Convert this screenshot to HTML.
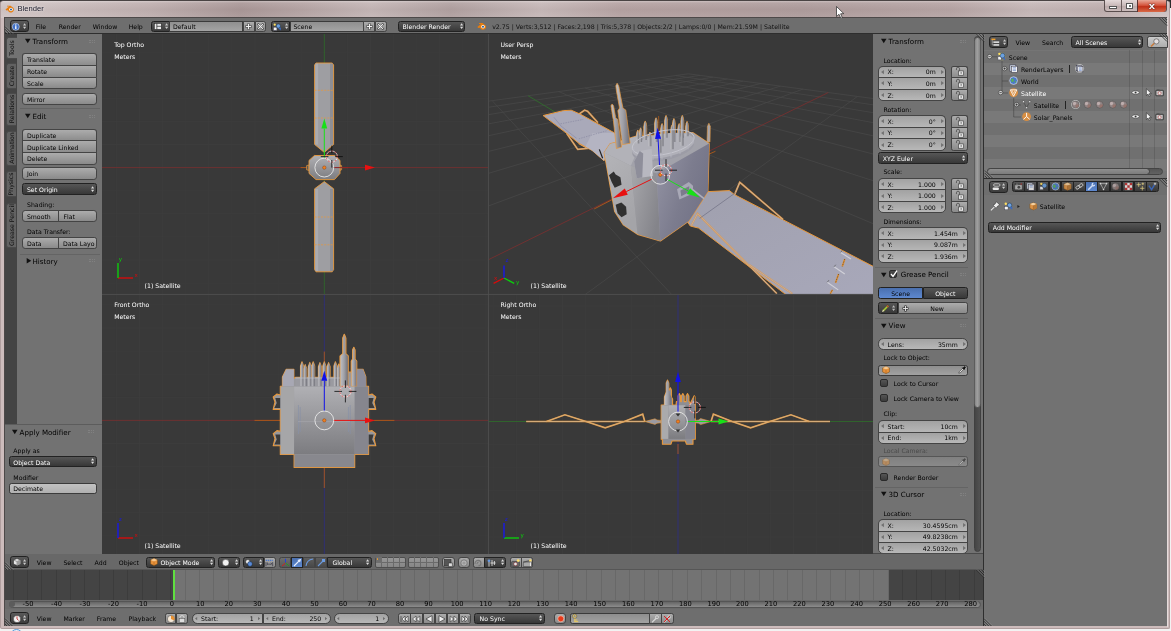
<!DOCTYPE html>
<html lang="en"><head><meta charset="utf-8"><title>Blender</title>
<style>
html,body{margin:0;padding:0;}
body{width:1171px;height:631px;overflow:hidden;position:relative;background:#c8b8b8;font-family:"DejaVu Sans","Liberation Sans",sans-serif;font-size:6.2px;color:#000;line-height:1;}
div,span{position:absolute;box-sizing:border-box;white-space:nowrap;}
svg{position:absolute;overflow:visible;}
.t{font-size:6.2px;line-height:8px;height:8px;color:#000;}
.w{color:#fff;}
.pt{font-size:7.1px;line-height:9px;height:9px;color:#000;}
/* tool button */
.tb{background:linear-gradient(#acacac,#8a8a8a);border:1px solid #444;border-radius:3.2px;}
.nf{background:linear-gradient(#a2a2a2,#b8b8b8);border:1px solid #444;border-radius:5.5px;}
.mn{background:linear-gradient(#565656,#383838);border:1px solid #222;border-radius:2.5px;color:#fff;}
.tf{background:linear-gradient(#999,#999);border:1px solid #3b3b3b;border-radius:2.5px;}
.cb{background:linear-gradient(#555,#3c3c3c);border:1px solid #2a2a2a;border-radius:2px;}
.sel{background:linear-gradient(#4a6fae,#5d88d0);border:1px solid #222;}
.sep{background:#666;height:1px;}
#root{left:0;top:0;width:1171px;height:631px;overflow:hidden;will-change:transform;}

</style></head>
<body>
<div id="root">
<!-- window frame -->
<div style="left:0px;top:0px;width:1171px;height:631px;background:#f2f2f2;"></div>
<div style="left:0px;top:0px;width:1171px;height:8px;background:#2c2c2c;"></div>
<div style="left:9.6px;top:628.6px;width:13px;height:13px;border-radius:7px;border:1.2px solid #5a9ad8;background:#e8f2fc;"></div>
<div style="left:0;top:0;width:1170px;height:629px;border-radius:4px 4px 2px 2px;background:#cdbcbc;border:1px solid #b09e9e;border-top-color:#4a4444;"></div>
<div style="left:1px;top:1px;width:1168px;height:17px;border-radius:3px 3px 0 0;background:linear-gradient(90deg,#d0c4c4 0px,#ccbfbf 50px,#bfafaf 150px,#a99797 240px,#b5a4a4 300px,#c4b6b6 370px,#b0a0a0 450px,#c6b8b8 540px,#b5a2a2 620px,#ae9c9c 800px,#b6a4a4 950px,#c6b8b8 1030px,#bfafaf 1100px,#d0c4c4 1170px);"></div>
<div style="left:1px;top:1px;width:1168px;height:17px;border-radius:3px 3px 0 0;background:linear-gradient(rgba(255,255,255,.35),rgba(255,255,255,.08) 12%,rgba(0,0,0,.02) 50%,rgba(255,255,255,.06));"></div>
<div style="left:4px;top:17px;width:1163px;height:609.4px;background:#4d4949;"></div>
<div style="left:1167px;top:18px;width:1px;height:609px;background:#e6dcdc;"></div>
<div style="left:5px;top:18px;width:1162px;height:608px;background:#2e2e2e;"></div>
<svg style="left:5px;top:4px" width="10" height="10" viewBox="0 0 20 20"><path d="M1 11 L8 5 L4 5 L4 3.4 L11 3.4 L17 8 A6 6 0 1 1 6 12.5 L3 12.8 Z" fill="#e87d0d"/><circle cx="12" cy="11" r="3.6" fill="#fff"/><circle cx="12" cy="11" r="2" fill="#235b9c"/></svg>
<div style="left:17.5px;top:4px;font-family:'Liberation Sans',sans-serif;font-size:7.6px;line-height:10px;color:#1a1a2a;text-shadow:0 0 3px #fff;">Blender</div>
<div style="left:1104px;top:0;width:63px;height:12px;border:1px solid #5a4e4e;border-top:none;border-radius:0 0 3px 3px;background:linear-gradient(#e4d9d9,#c9b9b9 50%,#b9a7a7 52%,#cbbcbc);"></div>
<div style="left:1121px;top:0;width:1px;height:11px;background:#6a5c5c;"></div>
<div style="left:1137px;top:0;width:29px;height:11.5px;border-radius:0 0 3px 0;background:linear-gradient(#e8a898,#d4543c 45%,#c03018 55%,#d86a48);border-left:1px solid #5a3030;"></div>
<div style="left:1109px;top:5.8px;width:8px;height:3px;background:#fff;border:0.5px solid #555;"></div>
<div style="left:1126px;top:3px;width:7px;height:5.5px;background:#fff;border:0.5px solid #555;"></div>
<div style="left:1128.5px;top:5px;width:2.5px;height:1.5px;background:#777;"></div>
<div style="left:1146.4px;top:0.9px;width:12px;transform:scaleX(1.25);font-family:'Liberation Sans',sans-serif;font-weight:bold;font-size:9px;line-height:10px;text-align:center;color:#fff;text-shadow:0 0 1px #422,0 0 1.5px #422;">x</div>
<svg style="left:836px;top:6px" width="9" height="13" viewBox="0 0 9 13"><path d="M0.5 0.5 L0.5 10.5 L3 8.3 L4.8 12.3 L6.3 11.6 L4.6 7.8 L7.8 7.6 Z" fill="#fff" stroke="#222" stroke-width="0.7"/></svg>
<!-- region backgrounds -->
<div style="left:5px;top:18px;width:1162px;height:15px;background:#6e6e6e;"></div>
<div style="left:5px;top:34px;width:97px;height:520px;background:#727272;"></div>
<div style="left:102px;top:34px;width:771px;height:520px;background:#393939;"></div>
<div style="left:873px;top:34px;width:110px;height:520px;background:#727272;"></div>
<div style="left:5px;top:554px;width:978px;height:15.2px;background:#686868;"></div>
<div style="left:5px;top:569.2px;width:978px;height:0.8px;background:#565656;"></div>
<div style="left:5px;top:570px;width:978px;height:30px;background:#444444;"></div>
<div style="left:173.4px;top:570px;width:714.8px;height:30px;background:#737373;"></div>
<div style="left:5px;top:600px;width:978px;height:9px;background:#6a6a6a;"></div>
<div style="left:5px;top:609px;width:978px;height:17px;background:#6e6e6e;"></div>
<div style="left:984px;top:34px;width:183px;height:16px;background:#6e6e6e;"></div>
<div style="left:984px;top:50px;width:183px;height:128px;background:#757575;"></div>
<div style="left:984px;top:179px;width:183px;height:16px;background:#6e6e6e;"></div>
<div style="left:984px;top:195px;width:183px;height:431px;background:#727272;"></div>
<!-- 3D viewports (quad view) -->
<svg style="left:102px;top:34px" width="771" height="520" viewBox="102 34 771 520">
<defs><clipPath id="cTL"><rect x="102" y="34" width="386" height="260"/></clipPath><clipPath id="cTR"><rect x="489" y="34" width="384" height="260"/></clipPath><clipPath id="cBL"><rect x="102" y="295" width="386" height="259"/></clipPath><clipPath id="cBR"><rect x="489" y="295" width="384" height="259"/></clipPath><linearGradient id="gBody" x1="0" y1="0" x2="0" y2="1"><stop offset="0" stop-color="#b0b0b4"/><stop offset="1" stop-color="#7c7c80"/></linearGradient><linearGradient id="gBodyH" x1="0" y1="0" x2="1" y2="0"><stop offset="0" stop-color="#b2b2b4"/><stop offset="0.5" stop-color="#9c9ca0"/><stop offset="1" stop-color="#84848c"/></linearGradient><linearGradient id="gSpire" x1="0" y1="0" x2="1" y2="0"><stop offset="0" stop-color="#c2c2c6"/><stop offset="0.5" stop-color="#a0a0a6"/><stop offset="1" stop-color="#6c6c74"/></linearGradient></defs>
<g clip-path="url(#cTL)"><path d="M116.4 34 V294 M139.5 34 V294 M162.6 34 V294 M185.7 34 V294 M208.8 34 V294 M231.9 34 V294 M255 34 V294 M278.1 34 V294 M301.2 34 V294 M347.4 34 V294 M370.5 34 V294 M393.6 34 V294 M416.7 34 V294 M439.8 34 V294 M462.9 34 V294 M486 34 V294 M102 52.1 H488 M102 75.2 H488 M102 98.3 H488 M102 121.4 H488 M102 144.5 H488 M102 190.7 H488 M102 213.8 H488 M102 236.9 H488 M102 260 H488 M102 283.1 H488 " stroke="#3e3e3e" stroke-width="0.7" fill="none"/><path d="M102 167.6 H488" stroke="#7a2e2e" stroke-width="0.8"/><path d="M324.3 34 V294" stroke="#2f6e2a" stroke-width="0.8"/></g>
<g clip-path="url(#cBL)"><path d="M116.4 295 V554 M139.5 295 V554 M162.6 295 V554 M185.7 295 V554 M208.8 295 V554 M231.9 295 V554 M255 295 V554 M278.1 295 V554 M301.2 295 V554 M347.4 295 V554 M370.5 295 V554 M393.6 295 V554 M416.7 295 V554 M439.8 295 V554 M462.9 295 V554 M486 295 V554 M102 304.9 H488 M102 328 H488 M102 351.1 H488 M102 374.2 H488 M102 397.3 H488 M102 443.5 H488 M102 466.6 H488 M102 489.7 H488 M102 512.8 H488 M102 535.9 H488 " stroke="#3e3e3e" stroke-width="0.7" fill="none"/><path d="M102 420.4 H488" stroke="#7a2e2e" stroke-width="0.8"/><path d="M324.3 295 V554" stroke="#2e2e86" stroke-width="0.8"/></g>
<g clip-path="url(#cBR)"><path d="M493.2 295 V554 M516.3 295 V554 M539.4 295 V554 M562.5 295 V554 M585.6 295 V554 M608.7 295 V554 M631.8 295 V554 M654.9 295 V554 M701.1 295 V554 M724.2 295 V554 M747.3 295 V554 M770.4 295 V554 M793.5 295 V554 M816.6 295 V554 M839.7 295 V554 M862.8 295 V554 M489 306 H873 M489 329.1 H873 M489 352.2 H873 M489 375.3 H873 M489 398.4 H873 M489 444.6 H873 M489 467.7 H873 M489 490.8 H873 M489 513.9 H873 M489 537 H873 " stroke="#3e3e3e" stroke-width="0.7" fill="none"/><path d="M489 421.5 H873" stroke="#2f6e2a" stroke-width="0.8"/><path d="M678 295 V554" stroke="#2e2e86" stroke-width="0.8"/></g>
<g clip-path="url(#cTR)"><path d="M684.02 -429.9 L397.09 113.71 M967.06 -510.91 L931.14 106.3 M139.48 -1449.45 L449.25 106.57 M2378.2 -1974.82 L891.33 100.97 M1615.11 1313.36 L492.19 100.68 M-735.95 1255.77 L857.44 96.43 M1079.4 310.36 L558.71 91.57 M157.42 329 L802.84 89.12 M1038.6 233.97 L585 87.96 M234.3 249.25 L780.52 86.13 M1015.78 191.24 L607.86 84.83 M277.92 203.99 L760.76 83.49 M1001.19 163.93 L627.91 82.08 M306.03 174.83 L743.14 81.13 M991.07 144.98 L645.65 79.65 M325.65 154.47 L727.34 79.01 M983.63 131.06 L661.45 77.49 M340.13 139.46 L713.08 77.1 M977.94 120.39 L675.62 75.55 M351.24 127.93 L700.16 75.37 M973.44 111.96 L688.39 73.8 M360.05 118.79 L688.39 73.8 " stroke="#494949" stroke-width="0.7" fill="none"/><path d="M-14.16 506.99 L828.25 92.52 " stroke="#7e2f2f" stroke-width="0.8"/><path d="M1173.22 486.02 L528.15 95.75 " stroke="#2f722a" stroke-width="0.8"/></g>
<g clip-path="url(#cTL)">
<polyline points="300.6,167.6 348,167.6" fill="none" stroke="#b05a18" stroke-width="0.9" /><polygon points="316,63 332.2,63 333.6,65 333.6,144.4 324.3,152.4 314.6,144.4 314.6,65" fill="#9e9ea2" stroke="#e8983c" stroke-width="0.9" stroke-linejoin="round" /><rect x="315.2" y="63.6" width="3" height="81" fill="#b4b4b8" opacity=".6"/><rect x="330" y="63.6" width="3" height="81" fill="#84848a" opacity=".6"/><polyline points="314.6,90.3 333.6,90.3" fill="none" stroke="#e8983c" stroke-width="0.7" stroke-dasharray="2 1.2"/><polyline points="314.6,118 333.6,118" fill="none" stroke="#e8983c" stroke-width="0.7" stroke-dasharray="2 1.2"/><polygon points="324.3,181.6 333.6,188.8 333.6,269.6 332.2,271.8 316,271.8 314.6,269.6 314.6,188.8" fill="#9e9ea2" stroke="#e8983c" stroke-width="0.9" stroke-linejoin="round" /><rect x="315.2" y="189" width="3" height="82" fill="#b4b4b8" opacity=".6"/><rect x="330" y="189" width="3" height="82" fill="#84848a" opacity=".6"/><polyline points="314.6,217 333.6,217" fill="none" stroke="#e8983c" stroke-width="0.7" stroke-dasharray="2 1.2"/><polyline points="314.6,244.8 333.6,244.8" fill="none" stroke="#e8983c" stroke-width="0.7" stroke-dasharray="2 1.2"/><polygon points="306.6,165.6 309,165 309,170.4 306.6,169.8" fill="#555" stroke="#e8983c" stroke-width="0.7" stroke-linejoin="round" /><polygon points="341.6,165.6 340,165 340,170.4 341.6,169.8" fill="#555" stroke="#e8983c" stroke-width="0.7" stroke-linejoin="round" /><polygon points="314.4,155.5 334.6,155.5 340,160.4 340,173.4 334.4,179.6 316,179.6 309,173.4 309,160.4" fill="url(#gBody)" stroke="#e8983c" stroke-width="0.9" stroke-linejoin="round" /><path d="M324.3 158.2 L324.3 128.6" stroke="#18e018" stroke-width="1"/><polygon points="324.3,118.6 327.2,128.6 321.4,128.6" fill="#18e018" /><path d="M333.7 167.6 L365 167.6" stroke="#8e2424" stroke-width="1"/><polygon points="375,167.6 365,170.5 365,164.7" fill="#e81010" /><circle cx="324.3" cy="167.6" r="9.4" fill="none" stroke="#e8e8e8" stroke-width="0.9"/><circle cx="324.3" cy="167.6" r="1.7" fill="#f08020" stroke="#803000" stroke-width="0.4"/><circle cx="331.8" cy="156.6" r="5.6" fill="none" stroke="#fff" stroke-width="0.7"/><circle cx="331.8" cy="156.6" r="5.6" fill="none" stroke="#e02020" stroke-width="0.7" stroke-dasharray="1.8 1.8"/><path d="M320.8 156.6 H328.4 M335.2 156.6 H342.8 M331.8 145.6 V153.2 M331.8 160 V167.6" stroke="#0a0a0a" stroke-width="0.8"/></g>
<g clip-path="url(#cBL)">
<polyline points="254.5,420.4 394.4,420.4" fill="none" stroke="#b05a18" stroke-width="0.9" /><polyline points="324.3,351.6 324.3,488" fill="none" stroke="#b05a18" stroke-width="0.9" /><polygon points="280.3,386.3 282.4,386.3 282.4,377 286.2,369.2 293.9,369.2 293.9,378.5 295.4,377.4 300.5,377.4 300.5,366 302,361.8 303.5,366 303.5,377.4 303.7,377.4 303.7,368.8 305.2,364.6 306.7,368.8 306.7,377.4 308.3,377.4 308.3,366.6 309.8,362.4 311.3,366.6 311.3,377.4 311.7,377.4 311.7,366 313.2,361.8 314.7,366 314.7,377.4 318.4,377.4 318.4,366.8 319.9,362.6 321.4,366.8 321.4,377.4 322.8,377.4 322.8,366 324.3,361.8 325.8,366 325.8,377.4 327.1,377.4 327.1,366.8 328.6,362.6 330.1,366.8 330.1,377.4 333.9,377.4 333.9,366 335.4,361.8 336.9,366 336.9,377.4 337.2,377.4 337.2,368.2 338.7,364 340.2,368.2 340.2,377.4 340.1,377.4 340.1,356 342.8,353.6 342.8,338 344.3,334.2 345.8,338 345.8,353.6 348.2,356 348.2,372 351.3,372 351.3,361 352.6,359 352.6,350 353.8,347.2 355,350 355,359 356.7,361 356.7,369.2 363,369.2 365.8,376.6 366,386.3 368.6,386.3 368.6,395 372,394 375.8,397 374,402 375.8,409.4 368.6,409.4 368.6,431.4 372,430.6 375.8,433.6 374,438.6 375.8,445.8 368.6,445.8 368.6,454.5 354.7,454.5 354.7,467.5 294.1,467.5 294.1,454.5 280.3,454.5 280.3,445.8 273.2,445.8 275,438.6 273.2,433.6 277,430.6 280.3,431.4 280.3,409.4 273.2,409.4 275,402 273.2,397 277,394 280.3,395" fill="#98989c" stroke="#e8983c" stroke-width="1.1" stroke-linejoin="round" /><polygon points="282.4,386.3 282.4,377 286.2,369.2 293.9,369.2 293.9,386.3" fill="#a8a8b4" /><polygon points="356.7,386.3 356.7,369.2 363,369.2 365.8,376.6 366,386.3" fill="#8c8c9a" /><rect x="295.4" y="377.4" width="56" height="9" fill="#9a9aa0"/><polygon points="300.5,386.3 300.5,366 302,361.8 303.5,366 303.5,386.3" fill="url(#gSpire)" /><polygon points="303.7,386.3 303.7,368.8 305.2,364.6 306.7,368.8 306.7,386.3" fill="url(#gSpire)" /><polygon points="308.3,386.3 308.3,366.6 309.8,362.4 311.3,366.6 311.3,386.3" fill="url(#gSpire)" /><polygon points="311.7,386.3 311.7,366 313.2,361.8 314.7,366 314.7,386.3" fill="url(#gSpire)" /><polygon points="318.4,386.3 318.4,366.8 319.9,362.6 321.4,366.8 321.4,386.3" fill="url(#gSpire)" /><polygon points="322.8,386.3 322.8,366 324.3,361.8 325.8,366 325.8,386.3" fill="url(#gSpire)" /><polygon points="327.1,386.3 327.1,366.8 328.6,362.6 330.1,366.8 330.1,386.3" fill="url(#gSpire)" /><polygon points="333.9,386.3 333.9,366 335.4,361.8 336.9,366 336.9,386.3" fill="url(#gSpire)" /><polygon points="337.2,386.3 337.2,368.2 338.7,364 340.2,368.2 340.2,386.3" fill="url(#gSpire)" /><path d="M295.4 378 H340" stroke="#c0c0c4" stroke-width="0.7"/><polygon points="340.1,386.3 340.1,356 342.8,353.6 342.8,338 344.3,334.2 345.8,338 345.8,353.6 348.2,356 348.2,386.3" fill="url(#gSpire)" stroke="#e8983c" stroke-width="0.6" stroke-linejoin="round" /><polygon points="351.3,386.3 351.3,361 352.6,359 352.6,350 353.8,347.2 355,350 355,359 356.7,361 356.7,386.3" fill="url(#gSpire)" stroke="#e8983c" stroke-width="0.6" stroke-linejoin="round" /><polygon points="280.3,398 275.3,398 276.7,403 274.3,408 280.3,408" fill="#3a3a3a" /><polygon points="280.3,434.4 275.3,434.4 276.7,439.4 274.3,444.4 280.3,444.4" fill="#3a3a3a" /><polygon points="368.6,398 373.6,398 372.2,403 374.6,408 368.6,408" fill="#3a3a3a" /><polygon points="368.6,434.4 373.6,434.4 372.2,439.4 374.6,444.4 368.6,444.4" fill="#3a3a3a" /><rect x="280.6" y="386.6" width="13.5" height="67.6" fill="#a6a6a8"/><rect x="294.1" y="386.6" width="60.6" height="67.6" fill="url(#gBody)"/><rect x="354.7" y="386.6" width="13.6" height="67.6" fill="#86868e"/><rect x="294.5" y="454.5" width="59.8" height="12.6" fill="#88888e"/><path d="M298.4 405 V434 M300.2 407 V432 M350.2 405 V434 M348.4 407 V432" stroke="#8890a8" stroke-width="0.7"/><path d="M298 421.6 H350" stroke="#a8a8ac" stroke-width="0.6"/><path d="M324.3 411 L324.3 380.8" stroke="#1010e8" stroke-width="1"/><polygon points="324.3,370.8 327.2,380.8 321.4,380.8" fill="#1010e8" /><path d="M333.7 420.4 L365 420.4" stroke="#e81010" stroke-width="1"/><polygon points="375,420.4 365,423.3 365,417.5" fill="#e81010" /><circle cx="324.3" cy="420.4" r="9.4" fill="none" stroke="#e8e8e8" stroke-width="0.9"/><circle cx="324.3" cy="420.4" r="1.7" fill="#f08020" stroke="#803000" stroke-width="0.4"/><circle cx="345.4" cy="391.4" r="5.6" fill="none" stroke="#fff" stroke-width="0.7"/><circle cx="345.4" cy="391.4" r="5.6" fill="none" stroke="#e02020" stroke-width="0.7" stroke-dasharray="1.8 1.8"/><path d="M334.4 391.4 H342 M348.8 391.4 H356.4 M345.4 380.4 V388 M345.4 394.8 V402.4" stroke="#0a0a0a" stroke-width="0.8"/></g>
<g clip-path="url(#cBR)">
<polyline points="678,444 678,454" fill="none" stroke="#b05a18" stroke-width="0.9" /><polyline points="526.2,421.5 644.8,421.5" fill="none" stroke="#e8983c" stroke-width="1.7" /><polyline points="526.2,421.5 644.8,421.5" fill="none" stroke="#c8b8a0" stroke-width="0.6" /><polyline points="546.4,421.5 564.9,414.8 586,421.5 605.2,427.8 624.3,421.5 642.7,414.1 644.8,421.5" fill="none" stroke="#e8983c" stroke-width="1.7" /><polyline points="546.4,421.5 564.9,414.8 586,421.5 605.2,427.8 624.3,421.5 642.7,414.1 644.8,421.5" fill="none" stroke="#c8b8a0" stroke-width="0.6" /><polygon points="644.8,421.5 655,418.8 657,420 661.2,420.4 661.2,422.8 657,423.2 655,424.4" fill="#9a9aa2" stroke="#e8983c" stroke-width="0.6" stroke-linejoin="round" /><polyline points="711,421.5 830,421.5" fill="none" stroke="#e8983c" stroke-width="1.7" /><polyline points="711,421.5 830,421.5" fill="none" stroke="#c8b8a0" stroke-width="0.6" /><polyline points="711,421.5 713.4,414.1 732.1,421.5 750.6,427.8 769.7,421.5 790.9,414.8 809.3,421.5" fill="none" stroke="#e8983c" stroke-width="1.7" /><polyline points="711,421.5 713.4,414.1 732.1,421.5 750.6,427.8 769.7,421.5 790.9,414.8 809.3,421.5" fill="none" stroke="#c8b8a0" stroke-width="0.6" /><polygon points="711,421.5 700.6,418.6 698.6,420 695.3,420.4 695.3,422.8 698.6,423.2 700.6,424.6" fill="#9a9aa2" stroke="#e8983c" stroke-width="0.6" stroke-linejoin="round" /><polygon points="661.2,405 664.4,405 664.4,397 666.2,392 666.2,383 667.5,380 668.8,383 668.8,390 669.4,390 670.4,387.8 671.4,390 671.4,397 672.6,399 672.6,405 676,405 676.4,401.6 677.8,401.6 677.8,396 679.2,393.5 680.6,396 680.6,401.6 681.4,401.6 681.4,396 682.8,393.5 684.2,396 684.2,401.6 686.1,401.6 686.1,396 687.5,393.5 688.9,396 688.9,401.6 689.6,402 690,404 694.2,395.7 695.3,397 695.3,405 695.3,439.2 693,439.2 693,444.2 686.4,444.2 685.4,441 672,441 671,444.2 662.4,444.2 662.4,439.2 661.2,439.2" fill="#8e8e94" stroke="#e8983c" stroke-width="1.1" stroke-linejoin="round" /><rect x="661.5" y="405.3" width="7" height="33.6" fill="#aaaaac"/><rect x="668.5" y="405.3" width="17" height="33.6" fill="url(#gBody)"/><rect x="685.5" y="405.3" width="9.5" height="33.6" fill="#84848e"/><polygon points="664.4,405 664.4,397 666.2,392 666.2,383 667.5,380 668.8,383 668.8,392 671.4,397 671.4,405" fill="url(#gSpire)" /><path d="M678 412.1 L678 382.1" stroke="#1010e8" stroke-width="1"/><polygon points="678,372.1 680.9,382.1 675.1,382.1" fill="#1010e8" /><path d="M687.4 421.5 L718.5 421.5" stroke="#18e018" stroke-width="1"/><polygon points="728.5,421.5 718.5,424.4 718.5,418.6" fill="#18e018" /><circle cx="678" cy="421.5" r="9.4" fill="none" stroke="#e8e8e8" stroke-width="0.9"/><circle cx="678" cy="421.5" r="1.7" fill="#f08020" stroke="#803000" stroke-width="0.4"/><path d="M675.6 413.6 H680.4 L678 416.4 Z M675.6 429.4 H680.4 L678 432.4 Z" fill="#333"/><circle cx="694.8" cy="407.4" r="5.6" fill="none" stroke="#fff" stroke-width="0.7"/><circle cx="694.8" cy="407.4" r="5.6" fill="none" stroke="#e02020" stroke-width="0.7" stroke-dasharray="1.8 1.8"/><path d="M683.8 407.4 H691.4 M698.2 407.4 H705.8 M694.8 396.4 V404 M694.8 410.8 V418.4" stroke="#0a0a0a" stroke-width="0.8"/></g>
<g clip-path="url(#cTR)">
<defs><linearGradient id="gR" x1="0" y1="0" x2="1" y2="0.6"><stop offset="0" stop-color="#9696a6"/><stop offset="0.6" stop-color="#7c7c8e"/><stop offset="1" stop-color="#727286"/></linearGradient><linearGradient id="gC" x1="0" y1="0" x2="1" y2="0.6"><stop offset="0" stop-color="#a8a8ac"/><stop offset="1" stop-color="#84848a"/></linearGradient><linearGradient id="gL" x1="0" y1="0" x2="0.4" y2="1"><stop offset="0" stop-color="#b4b4b8"/><stop offset="1" stop-color="#a4a4a8"/></linearGradient><linearGradient id="gPan" x1="0" y1="0" x2="1" y2="1"><stop offset="0" stop-color="#a0a0ae"/><stop offset="1" stop-color="#a8a8ba"/></linearGradient></defs><polyline points="660.3,175.4 658.6,116" fill="none" stroke="#b05a18" stroke-width="0.8" /><polyline points="615.59,197.82 594.19,208.94" fill="none" stroke="#b05a18" stroke-width="0.9" /><polyline points="659.81,175.56 715.45,151.31" fill="none" stroke="#b05a18" stroke-width="0.9" /><polyline points="578.79,114.19 584.56,110.2 587.66,111.31 597.86,122.62" fill="none" stroke="#e8983c" stroke-width="1.7" /><polyline points="578.79,114.19 584.56,110.2 587.66,111.31 597.86,122.62" fill="none" stroke="#b8b8c4" stroke-width="0.6" /><polyline points="566.59,133.27 577.68,149.35 587.66,148.35 578.79,143.25" fill="none" stroke="#e8983c" stroke-width="1.7" /><polyline points="566.59,133.27 577.68,149.35 587.66,148.35 578.79,143.25" fill="none" stroke="#b8b8c4" stroke-width="0.6" /><polygon points="543.08,115.52 563.27,110.65 571.25,110.2 579.9,113.97 614.28,132.82 618.71,142.14 607.62,152.12 604.07,160.77 592.1,150.45 578.79,143.25 566.59,133.27 557.72,126.61" fill="#a9a9b9" stroke="#e8983c" stroke-width="1.0" stroke-linejoin="round" /><polygon points="592.1,133.27 614.28,132.82 618.71,142.14 607.62,152.12 604.07,160.77 592.1,150.45 585.44,146.57" fill="#b4b4c2" /><polyline points="560.49,123.84 583.23,119.41" fill="none" stroke="#7c7c98" stroke-width="0.5" stroke-dasharray="1.5 1"/><polyline points="578.79,138.81 607.62,130.49" fill="none" stroke="#7c7c98" stroke-width="0.5" stroke-dasharray="1.5 1"/><polyline points="553.84,117.19 561.05,126.06 576.57,138.26" fill="none" stroke="#8080a0" stroke-width="0.5" /><polyline points="599.31,149.35 602.63,158.22" fill="none" stroke="#222" stroke-width="1.2" /><polygon points="706.78,191.63 729.43,190.6 734.58,194.72 873.2,266.4 877.73,268.87 877.73,301.82 795.35,301.82 698.54,228.08 690.3,226.02 687.21,221.49" fill="url(#gPan)" stroke="#e8983c" stroke-width="1.0" stroke-linejoin="round" /><polyline points="734.58,194.72 739.73,182.36 741.79,184.01 782.99,219.43" fill="none" stroke="#e8983c" stroke-width="1.8" /><polyline points="734.58,194.72 739.73,182.36 741.79,184.01 782.99,219.43" fill="none" stroke="#b8b8c4" stroke-width="0.7" /><polyline points="691.33,225.61 697.51,213.67 776.81,293.58" fill="none" stroke="#e8983c" stroke-width="1.6" /><polyline points="691.33,225.61 697.51,213.67 776.81,293.58" fill="none" stroke="#b0b0c0" stroke-width="0.8" /><polyline points="749,264.75 792.26,293.58" fill="none" stroke="#e8983c" stroke-width="1.6" /><polyline points="749,264.75 792.26,293.58" fill="none" stroke="#b0b0c0" stroke-width="0.8" /><polyline points="699.57,218.4 735.61,192.66" fill="none" stroke="#5a5a70" stroke-width="0.5" /><polyline points="840.66,252.39 850.96,258.98" fill="none" stroke="#d0d0d8" stroke-width="1.2" /><polyline points="840.66,252.39 842.31,250.33" fill="none" stroke="#555" stroke-width="0.7" /><polyline points="834.07,266.81 844.78,274.02" fill="none" stroke="#d0d0d8" stroke-width="1.2" /><polyline points="834.07,266.81 835.72,264.75" fill="none" stroke="#555" stroke-width="0.7" /><polyline points="827.27,282.26 838.19,289.88" fill="none" stroke="#d0d0d8" stroke-width="1.2" /><polyline points="827.27,282.26 828.92,280.2" fill="none" stroke="#555" stroke-width="0.7" /><polyline points="844.78,258.98 842.31,266.4" fill="none" stroke="#e8983c" stroke-width="1.8" /><polyline points="844.78,258.98 842.31,266.4" fill="none" stroke="#222" stroke-width="0.6" stroke-dasharray="1 0.8"/><polyline points="838.6,274.02 835.51,282.87" fill="none" stroke="#e8983c" stroke-width="1.8" /><polyline points="838.6,274.02 835.51,282.87" fill="none" stroke="#222" stroke-width="0.6" stroke-dasharray="1 0.8"/><polyline points="832.42,289.88 830.36,293.58" fill="none" stroke="#e8983c" stroke-width="1.8" /><polyline points="832.42,289.88 830.36,293.58" fill="none" stroke="#222" stroke-width="0.6" stroke-dasharray="1 0.8"/><polygon points="685.61,136.36 685.61,127.08 686.18,123.37 687.04,121.38 687.89,123.37 688.46,127.08 688.46,136.36" fill="#e8983c" stroke="#e8983c" stroke-width="0.9" stroke-linejoin="round" /><polygon points="664.63,137.79 664.63,121.09 665.21,117.38 666.06,115.38 666.92,117.38 667.49,121.09 667.49,137.79" fill="#e8983c" stroke="#e8983c" stroke-width="0.9" stroke-linejoin="round" /><polygon points="680.9,137.79 680.9,121.09 681.47,117.38 682.33,115.38 683.18,117.38 683.76,121.09 683.76,137.79" fill="#e8983c" stroke="#e8983c" stroke-width="0.9" stroke-linejoin="round" /><polygon points="643.8,139.93 643.8,126.66 644.37,122.95 645.23,120.95 646.08,122.95 646.66,126.66 646.66,139.93" fill="#e8983c" stroke="#e8983c" stroke-width="0.9" stroke-linejoin="round" /><polygon points="639.24,142.07 639.24,133.5 639.81,129.79 640.66,127.8 641.52,129.79 642.09,133.5 642.09,142.07" fill="#e8983c" stroke="#e8983c" stroke-width="0.9" stroke-linejoin="round" /><polygon points="654.65,142.07 654.65,123.52 655.22,119.81 656.07,117.81 656.93,119.81 657.5,123.52 657.5,142.07" fill="#e8983c" stroke="#e8983c" stroke-width="0.9" stroke-linejoin="round" /><polygon points="672.48,142.07 672.48,124.23 673.05,120.52 673.91,118.52 674.77,120.52 675.34,124.23 675.34,142.07" fill="#e8983c" stroke="#e8983c" stroke-width="0.9" stroke-linejoin="round" /><polygon points="677.76,142.07 677.76,129.22 678.33,125.51 679.19,123.52 680.05,125.51 680.62,129.22 680.62,142.07" fill="#e8983c" stroke="#e8983c" stroke-width="0.9" stroke-linejoin="round" /><polygon points="636.38,143.49 636.38,135.64 636.95,131.93 637.81,129.94 638.66,131.93 639.24,135.64 639.24,143.49" fill="#e8983c" stroke="#e8983c" stroke-width="0.9" stroke-linejoin="round" /><polygon points="680.62,145.63 680.62,137.79 681.19,134.08 682.04,132.08 682.9,134.08 683.47,137.79 683.47,145.63" fill="#e8983c" stroke="#e8983c" stroke-width="0.9" stroke-linejoin="round" /><polygon points="660.64,146.35 660.64,129.22 661.21,125.51 662.07,123.52 662.92,125.51 663.49,129.22 663.49,146.35" fill="#e8983c" stroke="#e8983c" stroke-width="0.9" stroke-linejoin="round" /><polygon points="648.51,146.35 648.51,137.79 649.08,134.08 649.94,132.08 650.79,134.08 651.36,137.79 651.36,146.35" fill="#e8983c" stroke="#e8983c" stroke-width="0.9" stroke-linejoin="round" /><polygon points="670.63,149.2 670.63,130.65 671.2,126.94 672.05,124.94 672.91,126.94 673.48,130.65 673.48,149.2" fill="#e8983c" stroke="#e8983c" stroke-width="0.9" stroke-linejoin="round" /><polygon points="658.5,152.77 658.5,140.64 659.07,136.93 659.93,134.93 660.78,136.93 661.35,140.64 661.35,152.77" fill="#e8983c" stroke="#e8983c" stroke-width="0.9" stroke-linejoin="round" /><polygon points="604.25,152.56 609.95,144 620.41,141.15 635.61,136.4 692.62,132.6 709.16,143.62 707.83,191.51 692.62,215.27 688.82,220.97 660.32,240.93 637.51,234.27 623.26,224.77 614.71,211.47" fill="#9a9aa0" stroke="#e8983c" stroke-width="1.3" stroke-linejoin="round" /><polygon points="604.25,152.56 609.95,144 620.41,141.15 635.61,136.4 692.62,132.6 709.16,143.62 656.51,173.46 630.86,165.86" fill="#a2a2aa" /><polygon points="604.25,152.56 609.95,144 620.41,141.15 635.61,136.4 639.41,145.9 630.86,165.86" fill="#b2b2b8" /><polygon points="604.25,152.56 630.86,165.86 637.51,234.27 623.26,224.77 614.71,211.47" fill="url(#gL)" /><polygon points="630.86,165.86 656.51,173.46 660.32,240.93 637.51,234.27" fill="url(#gC)" /><polygon points="656.51,173.46 709.16,143.62 707.83,191.51 692.62,215.27 688.82,220.97 660.32,240.93" fill="url(#gR)" /><polygon points="707.01,142.07 707.44,126.37 708.87,123.23 710.3,126.37 710.01,142.07" fill="#a4a4ac" stroke="#e8983c" stroke-width="0.6" stroke-linejoin="round" /><ellipse cx="663.2" cy="148.4" rx="31.4" ry="11.8" fill="#9c9ca6" transform="rotate(-10.6 663.2 148.4)"/><ellipse cx="663.2" cy="145.6" rx="31.4" ry="11.8" fill="#b0b0b8" transform="rotate(-10.6 663.2 145.6)"/><polygon points="685.61,136.36 685.61,127.08 686.18,123.37 687.04,121.38 687.89,123.37 688.46,127.08 688.46,136.36" fill="url(#gSpire)" /><polygon points="664.63,137.79 664.63,121.09 665.21,117.38 666.06,115.38 666.92,117.38 667.49,121.09 667.49,137.79" fill="url(#gSpire)" /><polygon points="680.9,137.79 680.9,121.09 681.47,117.38 682.33,115.38 683.18,117.38 683.76,121.09 683.76,137.79" fill="url(#gSpire)" /><polygon points="643.8,139.93 643.8,126.66 644.37,122.95 645.23,120.95 646.08,122.95 646.66,126.66 646.66,139.93" fill="url(#gSpire)" /><polygon points="639.24,142.07 639.24,133.5 639.81,129.79 640.66,127.8 641.52,129.79 642.09,133.5 642.09,142.07" fill="url(#gSpire)" /><polygon points="654.65,142.07 654.65,123.52 655.22,119.81 656.07,117.81 656.93,119.81 657.5,123.52 657.5,142.07" fill="url(#gSpire)" /><polygon points="672.48,142.07 672.48,124.23 673.05,120.52 673.91,118.52 674.77,120.52 675.34,124.23 675.34,142.07" fill="url(#gSpire)" /><polygon points="677.76,142.07 677.76,129.22 678.33,125.51 679.19,123.52 680.05,125.51 680.62,129.22 680.62,142.07" fill="url(#gSpire)" /><polygon points="636.38,143.49 636.38,135.64 636.95,131.93 637.81,129.94 638.66,131.93 639.24,135.64 639.24,143.49" fill="url(#gSpire)" /><polygon points="680.62,145.63 680.62,137.79 681.19,134.08 682.04,132.08 682.9,134.08 683.47,137.79 683.47,145.63" fill="url(#gSpire)" /><polygon points="660.64,146.35 660.64,129.22 661.21,125.51 662.07,123.52 662.92,125.51 663.49,129.22 663.49,146.35" fill="url(#gSpire)" /><polygon points="648.51,146.35 648.51,137.79 649.08,134.08 649.94,132.08 650.79,134.08 651.36,137.79 651.36,146.35" fill="url(#gSpire)" /><polygon points="670.63,149.2 670.63,130.65 671.2,126.94 672.05,124.94 672.91,126.94 673.48,130.65 673.48,149.2" fill="url(#gSpire)" /><polygon points="658.5,152.77 658.5,140.64 659.07,136.93 659.93,134.93 660.78,136.93 661.35,140.64 661.35,152.77" fill="url(#gSpire)" /><ellipse cx="663.2" cy="142.6" rx="31.4" ry="11.8" fill="none" stroke="#c6c6ce" stroke-width="0.9" transform="rotate(-10.6 663.2 142.6)"/><path d="M634 147.2 V153.0" stroke="#b4b4be" stroke-width="0.9"/><path d="M638.6 150.6 V156.4" stroke="#b4b4be" stroke-width="0.9"/><path d="M645 153.0 V158.8" stroke="#b4b4be" stroke-width="0.9"/><path d="M653 154.2 V160.0" stroke="#b4b4be" stroke-width="0.9"/><path d="M662 153.6 V159.4" stroke="#b4b4be" stroke-width="0.9"/><path d="M671 151.6 V157.4" stroke="#b4b4be" stroke-width="0.9"/><path d="M680 148.2 V154.0" stroke="#b4b4be" stroke-width="0.9"/><path d="M688 143.6 V149.4" stroke="#b4b4be" stroke-width="0.9"/><path d="M693 138.0 V143.8" stroke="#b4b4be" stroke-width="0.9"/><polygon points="616.4,148.49 613.26,119.24 612.84,117.81 610.98,105.68 612.12,103.97 613.55,105.68 615.69,117.81 617.83,119.52 621.54,147.06" fill="url(#gSpire)" stroke="#e8983c" stroke-width="0.7" stroke-linejoin="round" /><polygon points="622.4,144.63 617.83,110.67 619.54,108.11 616.4,90.7 615.83,85.7 617.12,83.28 618.69,85.7 620.68,96.4 622.97,108.11 625.82,110.1 630.1,143.21" fill="url(#gSpire)" stroke="#e8983c" stroke-width="0.7" stroke-linejoin="round" /><polygon points="634.09,161.49 639.79,151.04 651.76,148.76 653.09,175.93 636.75,178.21" fill="#b8b8c0" /><polygon points="634.09,161.49 639.79,151.04 643.21,153.51 642.26,177.45 636.75,178.21" fill="#8e8e9a" /><polygon points="609,175.36 613.76,171.56 615.66,174.41 620.41,177.26 621.55,184.86 614.71,187.71 611.66,182.01" fill="#303030" /><polygon points="615.66,204.82 621.36,202.54 626.11,206.72 626.68,214.32 621.55,217.36 617.56,213.37" fill="#303030" /><polygon points="677.04,189.23 688.82,182.01 693,185.81 693,193.42 679.32,199.5" fill="#a8a8b6" /><polygon points="680.46,190.56 689.2,186.19 689.2,191.89 681.22,196.27" fill="#7c7c8c" /><polyline points="692.62,189.61 704.03,198.74" fill="none" stroke="#b0b0bc" stroke-width="1.6" /><path d="M659.56 165.86 L658.07 138.83" stroke="#1010e8" stroke-width="1"/><polygon points="657.46,127.85 661.06,138.67 655.07,139" fill="#1010e8" /><path d="M651.76 179.16 L626.29 191.59" stroke="#e81010" stroke-width="1"/><polygon points="612.81,198.17 624.8,188.53 627.78,194.65" fill="#e81010" /><path d="M666.97 179.16 L688.48 191.1" stroke="#18e018" stroke-width="1"/><polygon points="699.84,197.41 686.83,194.07 690.13,188.13" fill="#18e018" /><circle cx="660.3" cy="174.8" r="9.4" fill="none" stroke="#e8e8e8" stroke-width="0.9"/><circle cx="660.3" cy="174.8" r="1.7" fill="#f08020" stroke="#803000" stroke-width="0.4"/><circle cx="666" cy="170.2" r="5.6" fill="none" stroke="#fff" stroke-width="0.7"/><circle cx="666" cy="170.2" r="5.6" fill="none" stroke="#e02020" stroke-width="0.7" stroke-dasharray="1.8 1.8"/><path d="M655 170.2 H662.6 M669.4 170.2 H677 M666 159.2 V166.8 M666 173.6 V181.2" stroke="#0a0a0a" stroke-width="0.8"/></g>
<path d="M488.4 34 V554 M102 294.4 H873" stroke="#505050" stroke-width="0.9"/>
</svg>
<div class="t w" style="left:114.2px;top:41.3px;">Top Ortho</div>
<div class="t w" style="left:114.2px;top:53.3px;">Meters</div>
<div class="t w" style="left:500.4px;top:41.3px;">User Persp</div>
<div class="t w" style="left:500.4px;top:53.3px;">Meters</div>
<div class="t w" style="left:114.2px;top:300.7px;">Front Ortho</div>
<div class="t w" style="left:114.2px;top:312.8px;">Meters</div>
<div class="t w" style="left:500.4px;top:300.7px;">Right Ortho</div>
<div class="t w" style="left:500.4px;top:312.8px;">Meters</div>
<div class="t w" style="left:144.6px;top:282.1px;">(1) Satellite</div>
<div class="t w" style="left:530.6px;top:282.1px;">(1) Satellite</div>
<div class="t w" style="left:144.6px;top:542.3px;">(1) Satellite</div>
<div class="t w" style="left:530.6px;top:542.3px;">(1) Satellite</div>
<svg style="left:105.6px;top:262px" width="30" height="24" viewBox="105.6 262 30 24"><path d="M117.6 278 L132.6 278" stroke="#d40c0c" stroke-width="1.4"/><text x="134.2" y="276.8" font-size="5.6" fill="#d40c0c" font-family="DejaVu Sans,Liberation Sans,sans-serif">x</text><path d="M117.6 278 L117.6 263" stroke="#0ccc0c" stroke-width="1.4"/><text x="118.4" y="261.4" font-size="5.6" fill="#0ccc0c" font-family="DejaVu Sans,Liberation Sans,sans-serif">y</text></svg>
<svg style="left:105.6px;top:522px" width="30" height="24" viewBox="105.6 522 30 24"><path d="M117.6 538 L132.6 538" stroke="#d40c0c" stroke-width="1.4"/><text x="134.2" y="536.8" font-size="5.6" fill="#d40c0c" font-family="DejaVu Sans,Liberation Sans,sans-serif">x</text><path d="M117.6 538 L117.6 523" stroke="#1818e8" stroke-width="1.4"/><text x="118.4" y="521.4" font-size="5.6" fill="#1818e8" font-family="DejaVu Sans,Liberation Sans,sans-serif">z</text></svg>
<svg style="left:491.6px;top:522px" width="30" height="24" viewBox="491.6 522 30 24"><path d="M503.6 538 L518.6 538" stroke="#0ccc0c" stroke-width="1.4"/><text x="520.2" y="536.8" font-size="5.6" fill="#0ccc0c" font-family="DejaVu Sans,Liberation Sans,sans-serif">y</text><path d="M503.6 538 L503.6 523" stroke="#1818e8" stroke-width="1.4"/><text x="504.4" y="521.4" font-size="5.6" fill="#1818e8" font-family="DejaVu Sans,Liberation Sans,sans-serif">z</text></svg>
<svg style="left:491.6px;top:262.2px" width="30" height="24" viewBox="491.6 262.2 30 24"><path d="M503.6 278.2 L493.2 283.6" stroke="#d40c0c" stroke-width="1.4"/><text x="493.6" y="280.6" font-size="5.6" fill="#d40c0c" font-family="DejaVu Sans,Liberation Sans,sans-serif">x</text><path d="M503.6 278.2 L513.8 283.6" stroke="#0ccc0c" stroke-width="1.4"/><text x="515.6" y="283.8" font-size="5.6" fill="#0ccc0c" font-family="DejaVu Sans,Liberation Sans,sans-serif">y</text><path d="M503.6 278.2 L503.6 265.6" stroke="#1818e8" stroke-width="1.4"/><text x="505.2" y="262.6" font-size="5.6" fill="#1818e8" font-family="DejaVu Sans,Liberation Sans,sans-serif">z</text></svg>
<!-- tool shelf -->
<div style="left:5px;top:34px;width:11.6px;height:390px;background:#444444;"></div>
<div style="left:6.2px;top:37.2px;width:11px;height:22.1px;background:#727272;border-radius:2.5px 0 0 2.5px;border:1px solid #4a4a4a;border-right:none;"></div>
<div class="t" style="left:0.55px;top:44.25px;width:22.1px;text-align:center;transform:rotate(-90deg);color:#111;">Tools</div>
<div style="left:6.2px;top:63.3px;width:10.2px;height:26.1px;background:#626262;border-radius:2.5px 0 0 2.5px;border:1px solid #4a4a4a;border-right:none;"></div>
<div class="t" style="left:-1.45px;top:72.35px;width:26.1px;text-align:center;transform:rotate(-90deg);color:#111;">Create</div>
<div style="left:6.2px;top:92.6px;width:10.2px;height:33.4px;background:#626262;border-radius:2.5px 0 0 2.5px;border:1px solid #4a4a4a;border-right:none;"></div>
<div class="t" style="left:-5.1px;top:105.3px;width:33.4px;text-align:center;transform:rotate(-90deg);color:#111;">Relations</div>
<div style="left:6.2px;top:130.5px;width:10.2px;height:35px;background:#626262;border-radius:2.5px 0 0 2.5px;border:1px solid #4a4a4a;border-right:none;"></div>
<div class="t" style="left:-5.9px;top:144px;width:35px;text-align:center;transform:rotate(-90deg);color:#111;">Animation</div>
<div style="left:6.2px;top:170.8px;width:10.2px;height:26.4px;background:#626262;border-radius:2.5px 0 0 2.5px;border:1px solid #4a4a4a;border-right:none;"></div>
<div class="t" style="left:-1.6px;top:180px;width:26.4px;text-align:center;transform:rotate(-90deg);color:#111;">Physics</div>
<div style="left:6.2px;top:202.5px;width:10.2px;height:45.5px;background:#626262;border-radius:2.5px 0 0 2.5px;border:1px solid #4a4a4a;border-right:none;"></div>
<div class="t" style="left:-11.15px;top:221.25px;width:45.5px;text-align:center;transform:rotate(-90deg);color:#111;">Grease Pencil</div>
<svg style="left:25.3px;top:38.45px" width="5.5" height="5.5" viewBox="0 0 5 5"><path d="M0 0.6 L5 0.6 L2.5 4.8 Z" fill="#111"/></svg>
<div class="pt" style="left:32.6px;top:37.2px;">Transform</div>
<div style="left:89px;top:39.7px;width:6px;height:3px;border-top:1px dotted #888;border-bottom:1px dotted #888;opacity:.7"></div>
<div class="tb" style="left:21.8px;top:53.1px;width:75px;height:12.5px;border-radius:3.2px 3.2px 0 0;border-bottom:none;"></div>
<div class="t" style="left:26.9px;top:56.4px;">Translate</div>
<div class="tb" style="left:21.8px;top:64.7px;width:75px;height:12.7px;border-radius:0;border-bottom:none;"></div>
<div class="t" style="left:26.9px;top:68.1px;">Rotate</div>
<div class="tb" style="left:21.8px;top:76.5px;width:75px;height:12.6px;border-radius:0 0 3.2px 3.2px;"></div>
<div class="t" style="left:26.9px;top:79.85px;">Scale</div>
<div class="tb" style="left:21.8px;top:92.5px;width:75px;height:12.5px;"></div>
<div class="t" style="left:26.9px;top:95.8px;">Mirror</div>
<div style="left:20px;top:108.2px;width:80px;height:0.8px;background:#646464;"></div>
<svg style="left:25.3px;top:113.25px" width="5.5" height="5.5" viewBox="0 0 5 5"><path d="M0 0.6 L5 0.6 L2.5 4.8 Z" fill="#111"/></svg>
<div class="pt" style="left:32.6px;top:112px;">Edit</div>
<div style="left:89px;top:114.5px;width:6px;height:3px;border-top:1px dotted #888;border-bottom:1px dotted #888;opacity:.7"></div>
<div class="tb" style="left:21.8px;top:128.7px;width:75px;height:12.5px;border-radius:3.2px 3.2px 0 0;border-bottom:none;"></div>
<div class="t" style="left:26.9px;top:132px;">Duplicate</div>
<div class="tb" style="left:21.8px;top:140.3px;width:75px;height:12.6px;border-radius:0;border-bottom:none;"></div>
<div class="t" style="left:26.9px;top:143.65px;">Duplicate Linked</div>
<div class="tb" style="left:21.8px;top:152px;width:75px;height:12.6px;border-radius:0 0 3.2px 3.2px;"></div>
<div class="t" style="left:26.9px;top:155.35px;">Delete</div>
<div class="tb" style="left:21.8px;top:167.1px;width:75px;height:12.5px;"></div>
<div class="t" style="left:26.9px;top:170.4px;">Join</div>
<div class="mn" style="left:21.8px;top:183px;width:75px;height:11.6px;"></div>
<div class="t w" style="left:26.9px;top:185.7px;">Set Origin</div>
<svg style="left:91.4px;top:185.7px" width="3.2" height="6.4" viewBox="0 0 3.2 6.4"><path d="M0 2.6 L1.6 0.3 L3.2 2.6 Z M0 3.8 L1.6 6.1 L3.2 3.8 Z" fill="#ddd"/></svg>
<div class="t" style="left:27px;top:200.5px;">Shading:</div>
<div class="tb" style="left:21.8px;top:209.5px;width:37.1px;height:12.3px;border-radius:3.2px 0 0 3.2px;"></div>
<div class="t" style="left:26.9px;top:212.7px;">Smooth</div>
<div class="tb" style="left:58.4px;top:209.5px;width:38.3px;height:12.3px;border-radius:0 3.2px 3.2px 0;"></div>
<div class="t" style="left:63.5px;top:212.7px;">Flat</div>
<div class="t" style="left:27px;top:227.8px;">Data Transfer:</div>
<div class="tb" style="left:21.8px;top:236.7px;width:37.1px;height:12.1px;border-radius:3.2px 0 0 3.2px;"></div>
<div class="t" style="left:26.9px;top:239.8px;">Data</div>
<div style="left:58.4px;top:237.2px;width:38.3px;height:11.8px;overflow:hidden;"><div class="tb" style="left:0;top:0;width:38.3px;height:11.8px;border-radius:0 2.5px 2.5px 0;"></div><div class="t" style="left:4.6px;top:2.7px;">Data Layo</div></div>
<div style="left:20px;top:253.6px;width:80px;height:0.8px;background:#646464;"></div>
<svg style="left:25.5px;top:258.05px" width="5.5" height="5.5" viewBox="0 0 5 5"><path d="M0.6 0 L0.6 5 L4.8 2.5 Z" fill="#111"/></svg>
<div class="pt" style="left:32.5px;top:256.8px;">History</div>
<div style="left:89px;top:259.3px;width:6px;height:3px;border-top:1px dotted #888;border-bottom:1px dotted #888;opacity:.7"></div>
<div style="left:5px;top:423.6px;width:97px;height:0.8px;background:#5c5c5c;"></div>
<svg style="left:12.3px;top:429.15px" width="5.5" height="5.5" viewBox="0 0 5 5"><path d="M0 0.6 L5 0.6 L2.5 4.8 Z" fill="#111"/></svg>
<div class="pt" style="left:19.6px;top:427.9px;">Apply Modifier</div>
<div style="left:88px;top:430.4px;width:6px;height:3px;border-top:1px dotted #888;border-bottom:1px dotted #888;opacity:.7"></div>
<div class="t" style="left:13.3px;top:446.7px;">Apply as</div>
<div class="mn" style="left:9.2px;top:455.8px;width:87.4px;height:11.4px;"></div>
<div class="t w" style="left:13.3px;top:458.5px;">Object Data</div>
<svg style="left:91.2px;top:458.4px" width="3.2" height="6.4" viewBox="0 0 3.2 6.4"><path d="M0 2.6 L1.6 0.3 L3.2 2.6 Z M0 3.8 L1.6 6.1 L3.2 3.8 Z" fill="#ddd"/></svg>
<div class="t" style="left:13.3px;top:473.7px;">Modifier</div>
<div class="tf" style="left:9.2px;top:483.4px;width:87.4px;height:10.2px;background:linear-gradient(#c2c2c2,#b0b0b0);"></div>
<div class="t" style="left:13.3px;top:484.8px;">Decimate</div>
<!-- properties (N) panel -->
<svg style="left:881.4px;top:38.45px" width="5.5" height="5.5" viewBox="0 0 5 5"><path d="M0 0.6 L5 0.6 L2.5 4.8 Z" fill="#111"/></svg>
<div class="pt" style="left:888.6px;top:37.2px;">Transform</div>
<div style="left:960px;top:39.7px;width:6px;height:3px;border-top:1px dotted #888;border-bottom:1px dotted #888;opacity:.7"></div>
<div class="t" style="left:883.4px;top:56.9px;">Location:</div>
<div class="nf" style="left:878.4px;top:65.6px;width:67.4px;height:12.55px;border-radius:5px 5px 0 0;border-bottom:none;"></div>
<svg style="left:881px;top:69.73px" width="3" height="4.2" viewBox="0 0 2.2 3.2"><path d="M2.2 0 L0 1.6 L2.2 3.2 Z" fill="#727272"/></svg><svg style="left:941px;top:69.73px" width="3" height="4.2" viewBox="0 0 2.2 3.2"><path d="M0 0 L2.2 1.6 L0 3.2 Z" fill="#727272"/></svg>
<div class="t" style="left:887.6px;top:68.33px;">X:</div>
<div class="t" style="right:235.2px;top:68.33px;">0m</div>
<div class="tb" style="left:951.2px;top:65.6px;width:16.6px;height:12.55px;border-radius:2.5px 2.5px 0 0;border-bottom:none;"></div>
<svg style="left:954.6px;top:66.42px" width="9.6" height="10.8" viewBox="0 0 8 9"><path d="M1.2 3.4 L1.2 2.4 Q1.2 1 2.5 1 Q3.8 1 3.8 2.4 L3.8 4.2" fill="none" stroke="#3a3a3a" stroke-width="0.55"/><rect x="3" y="4.1" width="4.2" height="3.6" fill="#e6e6e6" stroke="#444" stroke-width="0.55"/><rect x="4.7" y="5.2" width="0.8" height="1.2" fill="#444"/></svg>
<div class="nf" style="left:878.4px;top:77.25px;width:67.4px;height:12.55px;border-radius:0;border-bottom:none;"></div>
<svg style="left:881px;top:81.38px" width="3" height="4.2" viewBox="0 0 2.2 3.2"><path d="M2.2 0 L0 1.6 L2.2 3.2 Z" fill="#727272"/></svg><svg style="left:941px;top:81.38px" width="3" height="4.2" viewBox="0 0 2.2 3.2"><path d="M0 0 L2.2 1.6 L0 3.2 Z" fill="#727272"/></svg>
<div class="t" style="left:887.6px;top:79.97px;">Y:</div>
<div class="t" style="right:235.2px;top:79.97px;">0m</div>
<div class="tb" style="left:951.2px;top:77.25px;width:16.6px;height:12.55px;border-radius:0;border-bottom:none;"></div>
<svg style="left:954.6px;top:78.07px" width="9.6" height="10.8" viewBox="0 0 8 9"><path d="M1.2 3.4 L1.2 2.4 Q1.2 1 2.5 1 Q3.8 1 3.8 2.4 L3.8 4.2" fill="none" stroke="#3a3a3a" stroke-width="0.55"/><rect x="3" y="4.1" width="4.2" height="3.6" fill="#e6e6e6" stroke="#444" stroke-width="0.55"/><rect x="4.7" y="5.2" width="0.8" height="1.2" fill="#444"/></svg>
<div class="nf" style="left:878.4px;top:88.9px;width:67.4px;height:12.25px;border-radius:0 0 5px 5px;"></div>
<svg style="left:881px;top:93.03px" width="3" height="4.2" viewBox="0 0 2.2 3.2"><path d="M2.2 0 L0 1.6 L2.2 3.2 Z" fill="#727272"/></svg><svg style="left:941px;top:93.03px" width="3" height="4.2" viewBox="0 0 2.2 3.2"><path d="M0 0 L2.2 1.6 L0 3.2 Z" fill="#727272"/></svg>
<div class="t" style="left:887.6px;top:91.62px;">Z:</div>
<div class="t" style="right:235.2px;top:91.62px;">0m</div>
<div class="tb" style="left:951.2px;top:88.9px;width:16.6px;height:12.25px;border-radius:0 0 2.5px 2.5px;"></div>
<svg style="left:954.6px;top:89.72px" width="9.6" height="10.8" viewBox="0 0 8 9"><path d="M1.2 3.4 L1.2 2.4 Q1.2 1 2.5 1 Q3.8 1 3.8 2.4 L3.8 4.2" fill="none" stroke="#3a3a3a" stroke-width="0.55"/><rect x="3" y="4.1" width="4.2" height="3.6" fill="#e6e6e6" stroke="#444" stroke-width="0.55"/><rect x="4.7" y="5.2" width="0.8" height="1.2" fill="#444"/></svg>
<div class="t" style="left:883.4px;top:105.7px;">Rotation:</div>
<div class="nf" style="left:878.4px;top:115.1px;width:67.4px;height:12.55px;border-radius:5px 5px 0 0;border-bottom:none;"></div>
<svg style="left:881px;top:119.23px" width="3" height="4.2" viewBox="0 0 2.2 3.2"><path d="M2.2 0 L0 1.6 L2.2 3.2 Z" fill="#727272"/></svg><svg style="left:941px;top:119.23px" width="3" height="4.2" viewBox="0 0 2.2 3.2"><path d="M0 0 L2.2 1.6 L0 3.2 Z" fill="#727272"/></svg>
<div class="t" style="left:887.6px;top:117.83px;">X:</div>
<div class="t" style="right:235.2px;top:117.83px;">0°</div>
<div class="tb" style="left:951.2px;top:115.1px;width:16.6px;height:12.55px;border-radius:2.5px 2.5px 0 0;border-bottom:none;"></div>
<svg style="left:954.6px;top:115.92px" width="9.6" height="10.8" viewBox="0 0 8 9"><path d="M1.2 3.4 L1.2 2.4 Q1.2 1 2.5 1 Q3.8 1 3.8 2.4 L3.8 4.2" fill="none" stroke="#3a3a3a" stroke-width="0.55"/><rect x="3" y="4.1" width="4.2" height="3.6" fill="#e6e6e6" stroke="#444" stroke-width="0.55"/><rect x="4.7" y="5.2" width="0.8" height="1.2" fill="#444"/></svg>
<div class="nf" style="left:878.4px;top:126.75px;width:67.4px;height:12.55px;border-radius:0;border-bottom:none;"></div>
<svg style="left:881px;top:130.88px" width="3" height="4.2" viewBox="0 0 2.2 3.2"><path d="M2.2 0 L0 1.6 L2.2 3.2 Z" fill="#727272"/></svg><svg style="left:941px;top:130.88px" width="3" height="4.2" viewBox="0 0 2.2 3.2"><path d="M0 0 L2.2 1.6 L0 3.2 Z" fill="#727272"/></svg>
<div class="t" style="left:887.6px;top:129.47px;">Y:</div>
<div class="t" style="right:235.2px;top:129.47px;">0°</div>
<div class="tb" style="left:951.2px;top:126.75px;width:16.6px;height:12.55px;border-radius:0;border-bottom:none;"></div>
<svg style="left:954.6px;top:127.57px" width="9.6" height="10.8" viewBox="0 0 8 9"><path d="M1.2 3.4 L1.2 2.4 Q1.2 1 2.5 1 Q3.8 1 3.8 2.4 L3.8 4.2" fill="none" stroke="#3a3a3a" stroke-width="0.55"/><rect x="3" y="4.1" width="4.2" height="3.6" fill="#e6e6e6" stroke="#444" stroke-width="0.55"/><rect x="4.7" y="5.2" width="0.8" height="1.2" fill="#444"/></svg>
<div class="nf" style="left:878.4px;top:138.4px;width:67.4px;height:12.25px;border-radius:0 0 5px 5px;"></div>
<svg style="left:881px;top:142.53px" width="3" height="4.2" viewBox="0 0 2.2 3.2"><path d="M2.2 0 L0 1.6 L2.2 3.2 Z" fill="#727272"/></svg><svg style="left:941px;top:142.53px" width="3" height="4.2" viewBox="0 0 2.2 3.2"><path d="M0 0 L2.2 1.6 L0 3.2 Z" fill="#727272"/></svg>
<div class="t" style="left:887.6px;top:141.13px;">Z:</div>
<div class="t" style="right:235.2px;top:141.13px;">0°</div>
<div class="tb" style="left:951.2px;top:138.4px;width:16.6px;height:12.25px;border-radius:0 0 2.5px 2.5px;"></div>
<svg style="left:954.6px;top:139.23px" width="9.6" height="10.8" viewBox="0 0 8 9"><path d="M1.2 3.4 L1.2 2.4 Q1.2 1 2.5 1 Q3.8 1 3.8 2.4 L3.8 4.2" fill="none" stroke="#3a3a3a" stroke-width="0.55"/><rect x="3" y="4.1" width="4.2" height="3.6" fill="#e6e6e6" stroke="#444" stroke-width="0.55"/><rect x="4.7" y="5.2" width="0.8" height="1.2" fill="#444"/></svg>
<div class="mn" style="left:878.4px;top:152px;width:89.4px;height:12px;"></div>
<div class="t w" style="left:882.8px;top:155.1px;">XYZ Euler</div>
<svg style="left:962.4px;top:155.1px" width="3.2" height="6.4" viewBox="0 0 3.2 6.4"><path d="M0 2.6 L1.6 0.3 L3.2 2.6 Z M0 3.8 L1.6 6.1 L3.2 3.8 Z" fill="#ddd"/></svg>
<div class="t" style="left:883.4px;top:168.1px;">Scale:</div>
<div class="nf" style="left:878.4px;top:177.8px;width:67.4px;height:12.55px;border-radius:5px 5px 0 0;border-bottom:none;"></div>
<svg style="left:881px;top:181.93px" width="3" height="4.2" viewBox="0 0 2.2 3.2"><path d="M2.2 0 L0 1.6 L2.2 3.2 Z" fill="#727272"/></svg><svg style="left:941px;top:181.93px" width="3" height="4.2" viewBox="0 0 2.2 3.2"><path d="M0 0 L2.2 1.6 L0 3.2 Z" fill="#727272"/></svg>
<div class="t" style="left:887.6px;top:180.53px;">X:</div>
<div class="t" style="right:235.2px;top:180.53px;">1.000</div>
<div class="tb" style="left:951.2px;top:177.8px;width:16.6px;height:12.55px;border-radius:2.5px 2.5px 0 0;border-bottom:none;"></div>
<svg style="left:954.6px;top:178.62px" width="9.6" height="10.8" viewBox="0 0 8 9"><path d="M1.2 3.4 L1.2 2.4 Q1.2 1 2.5 1 Q3.8 1 3.8 2.4 L3.8 4.2" fill="none" stroke="#3a3a3a" stroke-width="0.55"/><rect x="3" y="4.1" width="4.2" height="3.6" fill="#e6e6e6" stroke="#444" stroke-width="0.55"/><rect x="4.7" y="5.2" width="0.8" height="1.2" fill="#444"/></svg>
<div class="nf" style="left:878.4px;top:189.45px;width:67.4px;height:12.55px;border-radius:0;border-bottom:none;"></div>
<svg style="left:881px;top:193.58px" width="3" height="4.2" viewBox="0 0 2.2 3.2"><path d="M2.2 0 L0 1.6 L2.2 3.2 Z" fill="#727272"/></svg><svg style="left:941px;top:193.58px" width="3" height="4.2" viewBox="0 0 2.2 3.2"><path d="M0 0 L2.2 1.6 L0 3.2 Z" fill="#727272"/></svg>
<div class="t" style="left:887.6px;top:192.18px;">Y:</div>
<div class="t" style="right:235.2px;top:192.18px;">1.000</div>
<div class="tb" style="left:951.2px;top:189.45px;width:16.6px;height:12.55px;border-radius:0;border-bottom:none;"></div>
<svg style="left:954.6px;top:190.28px" width="9.6" height="10.8" viewBox="0 0 8 9"><path d="M1.2 3.4 L1.2 2.4 Q1.2 1 2.5 1 Q3.8 1 3.8 2.4 L3.8 4.2" fill="none" stroke="#3a3a3a" stroke-width="0.55"/><rect x="3" y="4.1" width="4.2" height="3.6" fill="#e6e6e6" stroke="#444" stroke-width="0.55"/><rect x="4.7" y="5.2" width="0.8" height="1.2" fill="#444"/></svg>
<div class="nf" style="left:878.4px;top:201.1px;width:67.4px;height:12.25px;border-radius:0 0 5px 5px;"></div>
<svg style="left:881px;top:205.23px" width="3" height="4.2" viewBox="0 0 2.2 3.2"><path d="M2.2 0 L0 1.6 L2.2 3.2 Z" fill="#727272"/></svg><svg style="left:941px;top:205.23px" width="3" height="4.2" viewBox="0 0 2.2 3.2"><path d="M0 0 L2.2 1.6 L0 3.2 Z" fill="#727272"/></svg>
<div class="t" style="left:887.6px;top:203.83px;">Z:</div>
<div class="t" style="right:235.2px;top:203.83px;">1.000</div>
<div class="tb" style="left:951.2px;top:201.1px;width:16.6px;height:12.25px;border-radius:0 0 2.5px 2.5px;"></div>
<svg style="left:954.6px;top:201.93px" width="9.6" height="10.8" viewBox="0 0 8 9"><path d="M1.2 3.4 L1.2 2.4 Q1.2 1 2.5 1 Q3.8 1 3.8 2.4 L3.8 4.2" fill="none" stroke="#3a3a3a" stroke-width="0.55"/><rect x="3" y="4.1" width="4.2" height="3.6" fill="#e6e6e6" stroke="#444" stroke-width="0.55"/><rect x="4.7" y="5.2" width="0.8" height="1.2" fill="#444"/></svg>
<div class="t" style="left:883.4px;top:217.8px;">Dimensions:</div>
<div class="nf" style="left:878.4px;top:227px;width:89.4px;height:12.55px;border-radius:5px 5px 0 0;border-bottom:none;"></div>
<svg style="left:881px;top:231.12px" width="3" height="4.2" viewBox="0 0 2.2 3.2"><path d="M2.2 0 L0 1.6 L2.2 3.2 Z" fill="#727272"/></svg><svg style="left:963px;top:231.12px" width="3" height="4.2" viewBox="0 0 2.2 3.2"><path d="M0 0 L2.2 1.6 L0 3.2 Z" fill="#727272"/></svg>
<div class="t" style="left:887.6px;top:229.72px;">X:</div>
<div class="t" style="right:213.2px;top:229.72px;">1.454m</div>
<div class="nf" style="left:878.4px;top:238.65px;width:89.4px;height:12.55px;border-radius:0;border-bottom:none;"></div>
<svg style="left:881px;top:242.78px" width="3" height="4.2" viewBox="0 0 2.2 3.2"><path d="M2.2 0 L0 1.6 L2.2 3.2 Z" fill="#727272"/></svg><svg style="left:963px;top:242.78px" width="3" height="4.2" viewBox="0 0 2.2 3.2"><path d="M0 0 L2.2 1.6 L0 3.2 Z" fill="#727272"/></svg>
<div class="t" style="left:887.6px;top:241.38px;">Y:</div>
<div class="t" style="right:213.2px;top:241.38px;">9.087m</div>
<div class="nf" style="left:878.4px;top:250.3px;width:89.4px;height:12.25px;border-radius:0 0 5px 5px;"></div>
<svg style="left:881px;top:254.42px" width="3" height="4.2" viewBox="0 0 2.2 3.2"><path d="M2.2 0 L0 1.6 L2.2 3.2 Z" fill="#727272"/></svg><svg style="left:963px;top:254.42px" width="3" height="4.2" viewBox="0 0 2.2 3.2"><path d="M0 0 L2.2 1.6 L0 3.2 Z" fill="#727272"/></svg>
<div class="t" style="left:887.6px;top:253.02px;">Z:</div>
<div class="t" style="right:213.2px;top:253.02px;">1.936m</div>
<div style="left:875px;top:267.2px;width:93px;height:0.8px;background:#646464;"></div>
<svg style="left:881.4px;top:271.65px" width="5.5" height="5.5" viewBox="0 0 5 5"><path d="M0 0.6 L5 0.6 L2.5 4.8 Z" fill="#111"/></svg>
<div class="cb" style="left:889.4px;top:270.4px;width:8px;height:8px;background:linear-gradient(#4a4a4a,#383838);"></div>
<svg style="left:890.4px;top:269.8px" width="8" height="8" viewBox="0 0 8 8"><path d="M1 4 L3 6.4 L7 0.6" fill="none" stroke="#fff" stroke-width="1.3"/></svg>
<div class="pt" style="left:900.8px;top:270.4px;">Grease Pencil</div>
<div style="left:960px;top:272.9px;width:6px;height:3px;border-top:1px dotted #888;border-bottom:1px dotted #888;opacity:.7"></div>
<div class="sel" style="left:878.4px;top:287px;width:44.4px;height:11.6px;border-radius:2.5px 0 0 2.5px;"></div>
<div class="t" style="left:850.6px;width:100px;text-align:center;top:289.7px;">Scene</div>
<div class="mn" style="left:922.8px;top:287px;width:45px;height:11.6px;border-radius:0 2.5px 2.5px 0;"></div>
<div class="t w" style="left:895.3px;width:100px;text-align:center;top:289.7px;">Object</div>
<div class="mn" style="left:878.4px;top:302.2px;width:19.2px;height:11.6px;border-radius:2.5px 0 0 2.5px;"></div>
<svg style="left:880.5px;top:303.8px" width="9" height="9" viewBox="0 0 9 9"><path d="M1 8 L2 5.5 L6.8 0.8 L8.2 2.2 L3.5 7 Z" fill="#a8c838" stroke="#222" stroke-width="0.4"/><path d="M1 8 L2 5.5 L3.5 7 Z" fill="#e8e0c0"/><path d="M6 1.6 L7.4 3" stroke="#c03030" stroke-width="1.2"/></svg>
<svg style="left:892px;top:304.8px" width="3.2" height="6.4" viewBox="0 0 3.2 6.4"><path d="M0 2.6 L1.6 0.3 L3.2 2.6 Z M0 3.8 L1.6 6.1 L3.2 3.8 Z" fill="#bbb"/></svg>
<div class="tb" style="left:897.6px;top:302.2px;width:70.2px;height:11.6px;border-radius:0 2.5px 2.5px 0;"></div>
<svg style="left:901.5px;top:304.6px" width="7" height="7" viewBox="0 0 7 7"><path d="M3.5 0.5 V6.5 M0.5 3.5 H6.5" stroke="#222" stroke-width="2.1"/><path d="M3.5 1 V6 M1 3.5 H6" stroke="#eee" stroke-width="0.9"/></svg>
<div class="t" style="left:887px;width:100px;text-align:center;top:304.9px;">New</div>
<div style="left:875px;top:318px;width:93px;height:0.8px;background:#646464;"></div>
<svg style="left:881.4px;top:322.55px" width="5.5" height="5.5" viewBox="0 0 5 5"><path d="M0 0.6 L5 0.6 L2.5 4.8 Z" fill="#111"/></svg>
<div class="pt" style="left:888.6px;top:321.3px;">View</div>
<div style="left:960px;top:323.8px;width:6px;height:3px;border-top:1px dotted #888;border-bottom:1px dotted #888;opacity:.7"></div>
<div class="nf" style="left:878.4px;top:338px;width:89.4px;height:12.4px;border-radius:5.5px;"></div>
<svg style="left:881px;top:342.2px" width="3" height="4.2" viewBox="0 0 2.2 3.2"><path d="M2.2 0 L0 1.6 L2.2 3.2 Z" fill="#727272"/></svg><svg style="left:963px;top:342.2px" width="3" height="4.2" viewBox="0 0 2.2 3.2"><path d="M0 0 L2.2 1.6 L0 3.2 Z" fill="#727272"/></svg>
<div class="t" style="left:887.6px;top:340.8px;">Lens:</div>
<div class="t" style="right:213.2px;top:340.8px;">35mm</div>
<div class="t" style="left:883.4px;top:353.8px;">Lock to Object:</div>
<div class="tf" style="left:878.4px;top:364.6px;width:89.4px;height:11.2px;background:linear-gradient(#8e8e8e,#a2a2a2);"></div>
<svg style="left:881.6px;top:366.2px;" width="8" height="8" viewBox="0 0 8 8"><path d="M4 0.6 L7.4 2 L7.4 6 L4 7.6 L0.6 6 L0.6 2 Z" fill="#e8923a" stroke="#7a4a10" stroke-width="0.5"/><path d="M0.6 2 L4 3.4 L7.4 2 L4 0.6 Z" fill="#f6c890"/><path d="M4 3.4 V7.6" stroke="#a05a18" stroke-width="0.5"/></svg><svg style="left:957.5px;top:366.2px;" width="8" height="8" viewBox="0 0 8 8"><path d="M0.8 7.2 L1.2 5.8 L4.6 2.4 L5.6 3.4 L2.2 6.8 Z" fill="#ddd" stroke="#222" stroke-width="0.5"/><path d="M4.4 1.6 L6.4 3.6 M5 2.4 L6.4 0.8 Q7.4 0.6 7.2 1.8 L5.8 3.2" stroke="#111" stroke-width="1" fill="#111"/></svg>
<div class="cb" style="left:880.4px;top:379.4px;width:8px;height:8px;"></div>
<div class="t" style="left:893.6px;top:380.1px;">Lock to Cursor</div>
<div class="cb" style="left:880.4px;top:394.4px;width:8px;height:8px;"></div>
<div class="t" style="left:893.6px;top:395.1px;">Lock Camera to View</div>
<div class="t" style="left:883.4px;top:410.3px;">Clip:</div>
<div class="nf" style="left:878.4px;top:420px;width:89.4px;height:12.6px;border-radius:5px 5px 0 0;border-bottom:none;"></div>
<svg style="left:881px;top:424.15px" width="3" height="4.2" viewBox="0 0 2.2 3.2"><path d="M2.2 0 L0 1.6 L2.2 3.2 Z" fill="#727272"/></svg><svg style="left:963px;top:424.15px" width="3" height="4.2" viewBox="0 0 2.2 3.2"><path d="M0 0 L2.2 1.6 L0 3.2 Z" fill="#727272"/></svg>
<div class="t" style="left:887.6px;top:422.75px;">Start:</div>
<div class="t" style="right:213.2px;top:422.75px;">10cm</div>
<div class="nf" style="left:878.4px;top:431.7px;width:89.4px;height:12.3px;border-radius:0 0 5px 5px;"></div>
<svg style="left:881px;top:435.85px" width="3" height="4.2" viewBox="0 0 2.2 3.2"><path d="M2.2 0 L0 1.6 L2.2 3.2 Z" fill="#727272"/></svg><svg style="left:963px;top:435.85px" width="3" height="4.2" viewBox="0 0 2.2 3.2"><path d="M0 0 L2.2 1.6 L0 3.2 Z" fill="#727272"/></svg>
<div class="t" style="left:887.6px;top:434.45px;">End:</div>
<div class="t" style="right:213.2px;top:434.45px;">1km</div>
<div class="t" style="left:883.4px;top:446.5px;color:#4a4a4a;">Local Camera:</div>
<div class="tf" style="left:878.4px;top:455.8px;width:89.4px;height:11.4px;background:linear-gradient(#8e8e8e,#a2a2a2);opacity:.5;"></div>
<svg style="left:881.6px;top:457.5px;opacity:.5;" width="8" height="8" viewBox="0 0 8 8"><path d="M4 0.6 L7.4 2 L7.4 6 L4 7.6 L0.6 6 L0.6 2 Z" fill="#e8923a" stroke="#7a4a10" stroke-width="0.5"/><path d="M0.6 2 L4 3.4 L7.4 2 L4 0.6 Z" fill="#f6c890"/><path d="M4 3.4 V7.6" stroke="#a05a18" stroke-width="0.5"/></svg><svg style="left:957.5px;top:457.5px;opacity:.5;" width="8" height="8" viewBox="0 0 8 8"><path d="M0.8 7.2 L1.2 5.8 L4.6 2.4 L5.6 3.4 L2.2 6.8 Z" fill="#ddd" stroke="#222" stroke-width="0.5"/><path d="M4.4 1.6 L6.4 3.6 M5 2.4 L6.4 0.8 Q7.4 0.6 7.2 1.8 L5.8 3.2" stroke="#111" stroke-width="1" fill="#111"/></svg>
<div class="cb" style="left:880.4px;top:472.8px;width:8px;height:8px;"></div>
<div class="t" style="left:893.6px;top:473.5px;">Render Border</div>
<div style="left:875px;top:486.6px;width:93px;height:0.8px;background:#646464;"></div>
<svg style="left:881.4px;top:491.25px" width="5.5" height="5.5" viewBox="0 0 5 5"><path d="M0 0.6 L5 0.6 L2.5 4.8 Z" fill="#111"/></svg>
<div class="pt" style="left:888.6px;top:490px;">3D Cursor</div>
<div style="left:960px;top:492.5px;width:6px;height:3px;border-top:1px dotted #888;border-bottom:1px dotted #888;opacity:.7"></div>
<div class="t" style="left:883.4px;top:509.5px;">Location:</div>
<div class="nf" style="left:878.4px;top:519.3px;width:89.4px;height:12.4px;border-radius:5px 5px 0 0;border-bottom:none;"></div>
<svg style="left:881px;top:523.35px" width="3" height="4.2" viewBox="0 0 2.2 3.2"><path d="M2.2 0 L0 1.6 L2.2 3.2 Z" fill="#727272"/></svg><svg style="left:963px;top:523.35px" width="3" height="4.2" viewBox="0 0 2.2 3.2"><path d="M0 0 L2.2 1.6 L0 3.2 Z" fill="#727272"/></svg>
<div class="t" style="left:887.6px;top:521.95px;">X:</div>
<div class="t" style="right:213.2px;top:521.95px;">30.4595cm</div>
<div class="nf" style="left:878.4px;top:530.8px;width:89.4px;height:12.4px;border-radius:0;border-bottom:none;"></div>
<svg style="left:881px;top:534.85px" width="3" height="4.2" viewBox="0 0 2.2 3.2"><path d="M2.2 0 L0 1.6 L2.2 3.2 Z" fill="#727272"/></svg><svg style="left:963px;top:534.85px" width="3" height="4.2" viewBox="0 0 2.2 3.2"><path d="M0 0 L2.2 1.6 L0 3.2 Z" fill="#727272"/></svg>
<div class="t" style="left:887.6px;top:533.45px;">Y:</div>
<div class="t" style="right:213.2px;top:533.45px;">49.8238cm</div>
<div class="nf" style="left:878.4px;top:542.3px;width:89.4px;height:12.1px;border-radius:0 0 5px 5px;"></div>
<svg style="left:881px;top:546.35px" width="3" height="4.2" viewBox="0 0 2.2 3.2"><path d="M2.2 0 L0 1.6 L2.2 3.2 Z" fill="#727272"/></svg><svg style="left:963px;top:546.35px" width="3" height="4.2" viewBox="0 0 2.2 3.2"><path d="M0 0 L2.2 1.6 L0 3.2 Z" fill="#727272"/></svg>
<div class="t" style="left:887.6px;top:544.95px;">Z:</div>
<div class="t" style="right:213.2px;top:544.95px;">42.5032cm</div>
<div style="left:873px;top:553.4px;width:110px;height:0.6px;background:#4a4a4a;"></div>
<div style="left:973.7px;top:36px;width:7.2px;height:516px;border-radius:3.6px;background:linear-gradient(90deg,#454545,#525252);border:0.5px solid #404040;"></div>
<div style="left:973.7px;top:36.5px;width:7.2px;height:371px;border-radius:3.6px;background:linear-gradient(90deg,#858585,#a0a0a0 45%,#848484);border:0.5px solid #5c5c5c;"></div>
<svg style="left:975.6px;top:34.2px" width="8" height="8" viewBox="0 0 8 8"><path d="M0.5 0 L8 7.5 M3.2 0 L8 4.8 M5.8 0 L8 2.2" stroke="#262626" stroke-width="0.9" fill="none"/><path d="M0.5 0 L8 7.5 M3.2 0 L8 4.8 M5.8 0 L8 2.2" stroke="#a0a0a0" stroke-width="0.5" fill="none" transform="translate(0.7,-0.3)"/></svg>
<!-- info header -->
<div class="mn" style="left:10px;top:20.2px;width:18.8px;height:11.8px;border-radius:2.8px;background:linear-gradient(#5a5a5a,#3c3c3c);"></div>
<svg style="left:12.4px;top:22.7px" width="7.6" height="7.6" viewBox="0 0 8 8"><circle cx="4" cy="4" r="3.7" fill="#3f6fc4" stroke="#dfe8f8" stroke-width="0.6"/><rect x="3.3" y="3.3" width="1.4" height="3" fill="#fff"/><circle cx="4" cy="2.1" r="0.8" fill="#fff"/></svg>
<svg style="left:23px;top:22.9px" width="3.2" height="6.4" viewBox="0 0 3.2 6.4"><path d="M0 2.6 L1.6 0.3 L3.2 2.6 Z M0 3.8 L1.6 6.1 L3.2 3.8 Z" fill="#ccc"/></svg>
<svg style="left:5px;top:26px" width="8" height="8" viewBox="0 0 8 8"><path d="M0 0.5 L7.5 8 M0 3.2 L4.8 8 M0 5.8 L2.2 8" stroke="#262626" stroke-width="0.9" fill="none"/><path d="M0 0.5 L7.5 8 M0 3.2 L4.8 8 M0 5.8 L2.2 8" stroke="#a0a0a0" stroke-width="0.5" fill="none" transform="translate(0.7,-0.3)"/></svg>
<div class="t" style="left:35.8px;top:23.1px;">File</div>
<div class="t" style="left:58.7px;top:23.1px;">Render</div>
<div class="t" style="left:92.8px;top:23.1px;">Window</div>
<div class="t" style="left:128.7px;top:23.1px;">Help</div>
<div class="mn" style="left:151.2px;top:20.6px;width:18.4px;height:11.2px;border-radius:2.5px 0 0 2.5px;background:linear-gradient(#5a5a5a,#3c3c3c);"></div>
<svg style="left:154px;top:23.2px" width="7.6" height="6.8" viewBox="0 0 8 7"><rect x="0.3" y="0.3" width="7.4" height="6.4" fill="#eee" stroke="#222" stroke-width="0.6"/><path d="M3 0.3 V6.7 M3 3.4 H7.7" stroke="#333" stroke-width="0.8"/></svg>
<svg style="left:164.6px;top:23.2px" width="3.2" height="6.4" viewBox="0 0 3.2 6.4"><path d="M0 2.6 L1.6 0.3 L3.2 2.6 Z M0 3.8 L1.6 6.1 L3.2 3.8 Z" fill="#ccc"/></svg>
<div class="tf" style="left:169.1px;top:20.6px;width:74.2px;height:11.2px;border-radius:0;background:linear-gradient(#8f8f8f,#a4a4a4);"></div>
<div class="t" style="left:173px;top:23.1px;">Default</div>
<div class="tb" style="left:242.8px;top:20.6px;width:12.2px;height:11.2px;border-radius:0;"></div>
<div class="tb" style="left:254.5px;top:20.6px;width:11.7px;height:11.2px;border-radius:0 2.5px 2.5px 0;"></div>
<svg style="left:245.45px;top:23px" width="7" height="7" viewBox="0 0 7 7"><path d="M3.5 0.2 V6.8 M0.2 3.5 H6.8" stroke="#3a3a3a" stroke-width="2"/><path d="M3.5 0.8 V6.2 M0.8 3.5 H6.2" stroke="#f0f0f0" stroke-width="1.1"/></svg><svg style="left:256.9px;top:23px" width="7" height="7" viewBox="0 0 7 7"><path d="M0.6 0.6 L6.4 6.4 M6.4 0.6 L0.6 6.4" stroke="#3a3a3a" stroke-width="2"/><path d="M1.1 1.1 L5.9 5.9 M5.9 1.1 L1.1 5.9" stroke="#f0f0f0" stroke-width="1.1"/></svg>
<div class="mn" style="left:270.6px;top:20.6px;width:19.4px;height:11.2px;border-radius:2.5px 0 0 2.5px;background:linear-gradient(#5a5a5a,#3c3c3c);"></div>
<svg style="left:273.4px;top:22.6px" width="8.6" height="8" viewBox="0 0 9 8"><rect x="0.5" y="4.2" width="3.6" height="3.4" fill="#f4f4f4" stroke="#445" stroke-width="0.5"/><circle cx="5.6" cy="3" r="2.2" fill="#6aa0e0" stroke="#234" stroke-width="0.5"/><path d="M5.4 5.2 L8 7.6 L8.4 4.6 Z" fill="#3a6ac0"/><circle cx="1.8" cy="1.6" r="1.2" fill="#ffe060"/></svg>
<svg style="left:285px;top:23.2px" width="3.2" height="6.4" viewBox="0 0 3.2 6.4"><path d="M0 2.6 L1.6 0.3 L3.2 2.6 Z M0 3.8 L1.6 6.1 L3.2 3.8 Z" fill="#ccc"/></svg>
<div class="tf" style="left:289.5px;top:20.6px;width:74px;height:11.2px;border-radius:0;background:linear-gradient(#8f8f8f,#a4a4a4);"></div>
<div class="t" style="left:293.4px;top:23.1px;">Scene</div>
<div class="tb" style="left:363px;top:20.6px;width:12.4px;height:11.2px;border-radius:0;"></div>
<div class="tb" style="left:374.9px;top:20.6px;width:11.7px;height:11.2px;border-radius:0 2.5px 2.5px 0;"></div>
<svg style="left:365.75px;top:23px" width="7" height="7" viewBox="0 0 7 7"><path d="M3.5 0.2 V6.8 M0.2 3.5 H6.8" stroke="#3a3a3a" stroke-width="2"/><path d="M3.5 0.8 V6.2 M0.8 3.5 H6.2" stroke="#f0f0f0" stroke-width="1.1"/></svg><svg style="left:377.3px;top:23px" width="7" height="7" viewBox="0 0 7 7"><path d="M0.6 0.6 L6.4 6.4 M6.4 0.6 L0.6 6.4" stroke="#3a3a3a" stroke-width="2"/><path d="M1.1 1.1 L5.9 5.9 M5.9 1.1 L1.1 5.9" stroke="#f0f0f0" stroke-width="1.1"/></svg>
<div class="mn" style="left:398px;top:20.6px;width:67.4px;height:11.2px;"></div>
<div class="t w" style="left:402.6px;top:23.1px;">Blender Render</div>
<svg style="left:460px;top:23.2px" width="3.2" height="6.4" viewBox="0 0 3.2 6.4"><path d="M0 2.6 L1.6 0.3 L3.2 2.6 Z M0 3.8 L1.6 6.1 L3.2 3.8 Z" fill="#ddd"/></svg>
<svg style="left:477px;top:22.4px" width="10" height="8.4" viewBox="0 0 20 17"><path d="M0.5 10 L8 4 L4 4 L4 2.2 L11 2.2 L17.5 7 A6.2 6.2 0 1 1 6 11.8 L2.6 12 Z" fill="#e87d0d"/><circle cx="12" cy="9.6" r="3.6" fill="#fff"/><circle cx="12" cy="9.6" r="2" fill="#235b9c"/></svg>
<div class="t" style="left:492.2px;top:23.1px;color:#111;font-size:6.235px;">v2.75 | Verts:3,512 | Faces:2,198 | Tris:5,378 | Objects:2/2 | Lamps:0/0 | Mem:21.59M | Satellite</div>
<svg style="left:1158.6px;top:18.4px" width="8" height="8" viewBox="0 0 8 8"><path d="M0.5 0 L8 7.5 M3.2 0 L8 4.8 M5.8 0 L8 2.2" stroke="#262626" stroke-width="0.9" fill="none"/><path d="M0.5 0 L8 7.5 M3.2 0 L8 4.8 M5.8 0 L8 2.2" stroke="#a0a0a0" stroke-width="0.5" fill="none" transform="translate(0.7,-0.3)"/></svg>
<!-- 3D view header -->
<div class="mn" style="left:10px;top:556.2px;width:18.8px;height:12px;border-radius:2.8px;background:linear-gradient(#5a5a5a,#3c3c3c);"></div>
<svg style="left:12.6px;top:558.4px" width="8" height="8" viewBox="0 0 8 8"><path d="M4 0.5 L7.5 2 L7.5 6 L4 7.5 L0.5 6 L0.5 2 Z" fill="#e6e6e6" stroke="#222" stroke-width="0.5"/><path d="M0.5 2 L4 3.5 L7.5 2 M4 3.5 V7.5" stroke="#555" stroke-width="0.5" fill="none"/><path d="M4 3.5 L7.5 2 L7.5 6 L4 7.5 Z" fill="#9a9a9a"/></svg>
<svg style="left:23px;top:559px" width="3.2" height="6.4" viewBox="0 0 3.2 6.4"><path d="M0 2.6 L1.6 0.3 L3.2 2.6 Z M0 3.8 L1.6 6.1 L3.2 3.8 Z" fill="#ccc"/></svg>
<svg style="left:5px;top:562px" width="8" height="8" viewBox="0 0 8 8"><path d="M0 0.5 L7.5 8 M0 3.2 L4.8 8 M0 5.8 L2.2 8" stroke="#262626" stroke-width="0.9" fill="none"/><path d="M0 0.5 L7.5 8 M0 3.2 L4.8 8 M0 5.8 L2.2 8" stroke="#a0a0a0" stroke-width="0.5" fill="none" transform="translate(0.7,-0.3)"/></svg>
<div class="t" style="left:36.8px;top:559.1px;">View</div>
<div class="t" style="left:63.4px;top:559.1px;">Select</div>
<div class="t" style="left:94.6px;top:559.1px;">Add</div>
<div class="t" style="left:118.8px;top:559.1px;">Object</div>
<div class="mn" style="left:146.4px;top:556.6px;width:69px;height:11.4px;"></div>
<svg style="left:149.6px;top:558.4px" width="8" height="8" viewBox="0 0 8 8"><path d="M4 0.6 L7.4 2 L7.4 6 L4 7.6 L0.6 6 L0.6 2 Z" fill="#e8923a" stroke="#7a4a10" stroke-width="0.5"/><path d="M0.6 2 L4 3.4 L7.4 2 L4 0.6 Z" fill="#f6c890"/><path d="M4 3.4 V7.6" stroke="#a05a18" stroke-width="0.5"/></svg>
<div class="t w" style="left:160.4px;top:559.1px;">Object Mode</div>
<svg style="left:210px;top:559.2px" width="3.2" height="6.4" viewBox="0 0 3.2 6.4"><path d="M0 2.6 L1.6 0.3 L3.2 2.6 Z M0 3.8 L1.6 6.1 L3.2 3.8 Z" fill="#ddd"/></svg>
<div class="mn" style="left:218.2px;top:556.6px;width:22px;height:11.4px;"></div>
<svg style="left:221.6px;top:558.8px" width="7.4" height="7.4" viewBox="0 0 8 8"><circle cx="4" cy="4" r="3.6" fill="#f2f2f2" stroke="#222" stroke-width="0.5"/></svg>
<svg style="left:234.6px;top:559.2px" width="3.2" height="6.4" viewBox="0 0 3.2 6.4"><path d="M0 2.6 L1.6 0.3 L3.2 2.6 Z M0 3.8 L1.6 6.1 L3.2 3.8 Z" fill="#ddd"/></svg>
<div class="mn" style="left:242.6px;top:556.6px;width:21.6px;height:11.4px;border-radius:2.5px 0 0 2.5px;"></div>
<svg style="left:245.4px;top:558.6px" width="8" height="8" viewBox="0 0 8 8"><circle cx="2.8" cy="2.8" r="2.2" fill="#eee" stroke="#222" stroke-width="0.5"/><circle cx="5" cy="5" r="2.4" fill="#5a8ad8" stroke="#123" stroke-width="0.5"/></svg>
<svg style="left:258.8px;top:559.2px" width="3.2" height="6.4" viewBox="0 0 3.2 6.4"><path d="M0 2.6 L1.6 0.3 L3.2 2.6 Z M0 3.8 L1.6 6.1 L3.2 3.8 Z" fill="#ddd"/></svg>
<div class="tb" style="left:263.8px;top:556.6px;width:11.8px;height:11.4px;border-radius:0 2.5px 2.5px 0;"></div>
<svg style="left:265.4px;top:558.6px" width="8.6" height="8" viewBox="0 0 9 8"><path d="M0.8 1.2 H8.2" stroke="#4a78d0" stroke-width="1.2" stroke-dasharray="1.4 0.8"/><path d="M1 3 V7.4 M8 3 V7.4 M2 5.2 H7 M2 4.5 L3 3.6 M2 4.5 L3 5.4 M7 4.5 L6 3.6 M7 4.5 L6 5.4" stroke="#223" stroke-width="0.6" fill="none"/></svg>
<div class="tb" style="left:279px;top:556.6px;width:12.4px;height:11.4px;border-radius:2.5px 0 0 2.5px;background:linear-gradient(#6e6e6e,#585858);"></div>
<svg style="left:280.6px;top:558.2px" width="9" height="9" viewBox="0 0 9 9"><path d="M4.5 5 V0.8" stroke="#2040e0" stroke-width="1"/><path d="M4.5 5 L1 8" stroke="#d02020" stroke-width="1"/><path d="M4.5 5 L8.2 8" stroke="#20a020" stroke-width="1"/></svg>
<div class="sel" style="left:291px;top:556.6px;width:12.4px;height:11.4px;border-radius:0;"></div>
<svg style="left:292.8px;top:558.4px" width="9" height="9" viewBox="0 0 9 9"><path d="M1 8 L6.4 2.6" stroke="#e8f0ff" stroke-width="1.2"/><path d="M8.2 0.8 L4.4 2 L7 4.6 Z" fill="#e8f0ff"/></svg>
<div class="tb" style="left:303px;top:556.6px;width:12.2px;height:11.4px;border-radius:0;background:linear-gradient(#5e5e5e,#484848);"></div>
<svg style="left:304.6px;top:558.4px" width="9" height="9" viewBox="0 0 9 9"><path d="M1 8 Q1.6 2 8 1" stroke="#6a9ae0" stroke-width="1.1" fill="none"/></svg>
<div class="tb" style="left:314.8px;top:556.6px;width:12.2px;height:11.4px;border-radius:0;background:linear-gradient(#5e5e5e,#484848);"></div>
<svg style="left:316.6px;top:558.4px" width="9" height="9" viewBox="0 0 9 9"><path d="M1 8 L6 3" stroke="#6a9ae0" stroke-width="1.1"/><rect x="5" y="1" width="3" height="3" fill="#6a9ae0"/></svg>
<div class="mn" style="left:326.8px;top:556.6px;width:45px;height:11.4px;border-radius:0 2.5px 2.5px 0;"></div>
<div class="t w" style="left:332.4px;top:559.1px;">Global</div>
<svg style="left:366.4px;top:559.2px" width="3.2" height="6.4" viewBox="0 0 3.2 6.4"><path d="M0 2.6 L1.6 0.3 L3.2 2.6 Z M0 3.8 L1.6 6.1 L3.2 3.8 Z" fill="#ddd"/></svg>
<div style="left:375px;top:556.6px;width:30.6px;height:11.4px;border-radius:2px;background:linear-gradient(#979797,#868686);border:0.7px solid #4e4e4e;"></div><div style="left:380.82px;top:557.2px;width:0.7px;height:10.2px;background:#6a6a6a;"></div><div style="left:386.94px;top:557.2px;width:0.7px;height:10.2px;background:#6a6a6a;"></div><div style="left:393.06px;top:557.2px;width:0.7px;height:10.2px;background:#6a6a6a;"></div><div style="left:399.18px;top:557.2px;width:0.7px;height:10.2px;background:#6a6a6a;"></div><div style="left:375.6px;top:561.95px;width:29.4px;height:0.7px;background:#6a6a6a;"></div>
<div style="left:375.6px;top:557.2px;width:6px;height:5.4px;background:#6e6e6e;"></div><div style="left:376.6px;top:558.2px;width:1.8px;height:1.8px;border-radius:1px;background:#f0a030;"></div>
<div style="left:408.4px;top:556.6px;width:30.6px;height:11.4px;border-radius:2px;background:linear-gradient(#979797,#868686);border:0.7px solid #4e4e4e;"></div><div style="left:414.22px;top:557.2px;width:0.7px;height:10.2px;background:#6a6a6a;"></div><div style="left:420.34px;top:557.2px;width:0.7px;height:10.2px;background:#6a6a6a;"></div><div style="left:426.46px;top:557.2px;width:0.7px;height:10.2px;background:#6a6a6a;"></div><div style="left:432.58px;top:557.2px;width:0.7px;height:10.2px;background:#6a6a6a;"></div><div style="left:409px;top:561.95px;width:29.4px;height:0.7px;background:#6a6a6a;"></div>
<div class="tb" style="left:442px;top:556.6px;width:13.2px;height:11.4px;"></div>
<svg style="left:444.2px;top:558.6px" width="9" height="8" viewBox="0 0 9 8"><rect x="0.5" y="0.5" width="6.5" height="6.5" fill="#555" stroke="#222" stroke-width="0.5"/><path d="M4.5 4 L8.4 4 L8.4 7.6 L4.5 7.6 Z" fill="#ddd" stroke="#222" stroke-width="0.5"/></svg>
<div class="tb" style="left:457.6px;top:556.6px;width:12px;height:11.4px;"></div>
<svg style="left:459.6px;top:558.6px" width="8" height="8" viewBox="0 0 8 8"><circle cx="4" cy="4" r="3.2" fill="#b5b5b5" stroke="#6e6e6e" stroke-width="0.8"/><circle cx="4" cy="4" r="1.6" fill="#9a9a9a"/></svg>
<div class="tb" style="left:472.6px;top:556.6px;width:12px;height:11.4px;border-radius:2.5px 0 0 2.5px;"></div>
<svg style="left:474.4px;top:558.6px" width="8" height="8" viewBox="0 0 8 8"><path d="M1 5 Q1 1.4 4.4 1.4 Q7 1.6 7 4.4 Q6.8 6.8 4.4 6.8 M3 5 Q3 3.2 4.6 3.2" stroke="#777" stroke-width="1.1" fill="none"/></svg>
<div class="mn" style="left:484.4px;top:556.6px;width:21.6px;height:11.4px;border-radius:0 2.5px 2.5px 0;"></div>
<svg style="left:487.4px;top:558.6px" width="9" height="8" viewBox="0 0 9 8"><circle cx="2" cy="1.8" r="1.4" fill="#6a9ae0"/><path d="M2 3 V7.6 M5 1 V7 M7.4 2 V6 M3.4 4 H8.6" stroke="#e8e8e8" stroke-width="0.8"/></svg>
<svg style="left:500.8px;top:559.2px" width="3.2" height="6.4" viewBox="0 0 3.2 6.4"><path d="M0 2.6 L1.6 0.3 L3.2 2.6 Z M0 3.8 L1.6 6.1 L3.2 3.8 Z" fill="#ddd"/></svg>
<div class="tb" style="left:509.6px;top:556.6px;width:12px;height:11.4px;border-radius:2.5px 0 0 2.5px;"></div>
<svg style="left:511.2px;top:558.6px" width="9" height="8" viewBox="0 0 9 8"><rect x="0.6" y="2.4" width="7.8" height="5" rx="0.8" fill="#6a6a6a" stroke="#222" stroke-width="0.5"/><circle cx="4.5" cy="5" r="1.8" fill="#e4e4e4" stroke="#802020" stroke-width="0.5"/><circle cx="7.2" cy="1.6" r="1.4" fill="#ffe070"/></svg>
<div class="tb" style="left:521.4px;top:556.6px;width:12px;height:11.4px;border-radius:0 2.5px 2.5px 0;"></div>
<svg style="left:523px;top:558.6px" width="9" height="8" viewBox="0 0 9 8"><rect x="0.6" y="3" width="7.8" height="4.4" fill="#e8e8e8" stroke="#333" stroke-width="0.5"/><path d="M0.6 2.6 L8.2 0.8 L8.4 2 L0.8 3.6 Z" fill="#555"/><path d="M2 3 V7.4 M4 3 V7.4 M6 3 V7.4" stroke="#333" stroke-width="0.7"/><circle cx="7.4" cy="1.4" r="1.2" fill="#ffe070"/></svg>
<!-- timeline -->
<div style="left:12.6px;top:570px;width:0.8px;height:30px;background:#3c3c3c;"></div><div style="left:26.95px;top:570px;width:0.8px;height:30px;background:#3c3c3c;"></div><div style="left:41.29px;top:570px;width:0.8px;height:30px;background:#3c3c3c;"></div><div style="left:55.64px;top:570px;width:0.8px;height:30px;background:#3c3c3c;"></div><div style="left:69.98px;top:570px;width:0.8px;height:30px;background:#3c3c3c;"></div><div style="left:84.33px;top:570px;width:0.8px;height:30px;background:#3c3c3c;"></div><div style="left:98.67px;top:570px;width:0.8px;height:30px;background:#3c3c3c;"></div><div style="left:113.02px;top:570px;width:0.8px;height:30px;background:#3c3c3c;"></div><div style="left:127.37px;top:570px;width:0.8px;height:30px;background:#3c3c3c;"></div><div style="left:141.71px;top:570px;width:0.8px;height:30px;background:#3c3c3c;"></div><div style="left:156.06px;top:570px;width:0.8px;height:30px;background:#3c3c3c;"></div><div style="left:170.4px;top:570px;width:0.8px;height:30px;background:#3c3c3c;"></div><div style="left:184.75px;top:570px;width:0.8px;height:30px;background:#686868;"></div><div style="left:199.09px;top:570px;width:0.8px;height:30px;background:#686868;"></div><div style="left:213.44px;top:570px;width:0.8px;height:30px;background:#686868;"></div><div style="left:227.78px;top:570px;width:0.8px;height:30px;background:#686868;"></div><div style="left:242.13px;top:570px;width:0.8px;height:30px;background:#686868;"></div><div style="left:256.47px;top:570px;width:0.8px;height:30px;background:#686868;"></div><div style="left:270.82px;top:570px;width:0.8px;height:30px;background:#686868;"></div><div style="left:285.16px;top:570px;width:0.8px;height:30px;background:#686868;"></div><div style="left:299.51px;top:570px;width:0.8px;height:30px;background:#686868;"></div><div style="left:313.85px;top:570px;width:0.8px;height:30px;background:#686868;"></div><div style="left:328.2px;top:570px;width:0.8px;height:30px;background:#686868;"></div><div style="left:342.54px;top:570px;width:0.8px;height:30px;background:#686868;"></div><div style="left:356.89px;top:570px;width:0.8px;height:30px;background:#686868;"></div><div style="left:371.23px;top:570px;width:0.8px;height:30px;background:#686868;"></div><div style="left:385.58px;top:570px;width:0.8px;height:30px;background:#686868;"></div><div style="left:399.92px;top:570px;width:0.8px;height:30px;background:#686868;"></div><div style="left:414.27px;top:570px;width:0.8px;height:30px;background:#686868;"></div><div style="left:428.61px;top:570px;width:0.8px;height:30px;background:#686868;"></div><div style="left:442.96px;top:570px;width:0.8px;height:30px;background:#686868;"></div><div style="left:457.3px;top:570px;width:0.8px;height:30px;background:#686868;"></div><div style="left:471.65px;top:570px;width:0.8px;height:30px;background:#686868;"></div><div style="left:485.99px;top:570px;width:0.8px;height:30px;background:#686868;"></div><div style="left:500.34px;top:570px;width:0.8px;height:30px;background:#686868;"></div><div style="left:514.68px;top:570px;width:0.8px;height:30px;background:#686868;"></div><div style="left:529.02px;top:570px;width:0.8px;height:30px;background:#686868;"></div><div style="left:543.37px;top:570px;width:0.8px;height:30px;background:#686868;"></div><div style="left:557.72px;top:570px;width:0.8px;height:30px;background:#686868;"></div><div style="left:572.06px;top:570px;width:0.8px;height:30px;background:#686868;"></div><div style="left:586.41px;top:570px;width:0.8px;height:30px;background:#686868;"></div><div style="left:600.75px;top:570px;width:0.8px;height:30px;background:#686868;"></div><div style="left:615.1px;top:570px;width:0.8px;height:30px;background:#686868;"></div><div style="left:629.44px;top:570px;width:0.8px;height:30px;background:#686868;"></div><div style="left:643.79px;top:570px;width:0.8px;height:30px;background:#686868;"></div><div style="left:658.13px;top:570px;width:0.8px;height:30px;background:#686868;"></div><div style="left:672.48px;top:570px;width:0.8px;height:30px;background:#686868;"></div><div style="left:686.82px;top:570px;width:0.8px;height:30px;background:#686868;"></div><div style="left:701.17px;top:570px;width:0.8px;height:30px;background:#686868;"></div><div style="left:715.51px;top:570px;width:0.8px;height:30px;background:#686868;"></div><div style="left:729.86px;top:570px;width:0.8px;height:30px;background:#686868;"></div><div style="left:744.2px;top:570px;width:0.8px;height:30px;background:#686868;"></div><div style="left:758.55px;top:570px;width:0.8px;height:30px;background:#686868;"></div><div style="left:772.89px;top:570px;width:0.8px;height:30px;background:#686868;"></div><div style="left:787.24px;top:570px;width:0.8px;height:30px;background:#686868;"></div><div style="left:801.58px;top:570px;width:0.8px;height:30px;background:#686868;"></div><div style="left:815.93px;top:570px;width:0.8px;height:30px;background:#686868;"></div><div style="left:830.27px;top:570px;width:0.8px;height:30px;background:#686868;"></div><div style="left:844.62px;top:570px;width:0.8px;height:30px;background:#686868;"></div><div style="left:858.96px;top:570px;width:0.8px;height:30px;background:#686868;"></div><div style="left:873.31px;top:570px;width:0.8px;height:30px;background:#686868;"></div><div style="left:887.65px;top:570px;width:0.8px;height:30px;background:#686868;"></div><div style="left:902px;top:570px;width:0.8px;height:30px;background:#3c3c3c;"></div><div style="left:916.34px;top:570px;width:0.8px;height:30px;background:#3c3c3c;"></div><div style="left:930.69px;top:570px;width:0.8px;height:30px;background:#3c3c3c;"></div><div style="left:945.03px;top:570px;width:0.8px;height:30px;background:#3c3c3c;"></div><div style="left:959.38px;top:570px;width:0.8px;height:30px;background:#3c3c3c;"></div><div style="left:973.72px;top:570px;width:0.8px;height:30px;background:#3c3c3c;"></div>
<div style="left:172.8px;top:570px;width:1.8px;height:30px;background:#5fe040;"></div>
<div style="left:8.5px;top:600.6px;width:972px;height:7.4px;border-radius:3.7px;background:linear-gradient(#666,#8c8c8c);border:0.5px solid #555;"></div>
<div style="left:9.4px;top:601.4px;width:5.8px;height:5.8px;border-radius:3px;background:#5c5c5c;"></div>
<div style="left:973.6px;top:601.4px;width:5.8px;height:5.8px;border-radius:3px;background:#8a8a8a;opacity:.5"></div>
<div class="t" style="left:7.95px;width:40px;text-align:center;top:600.4px;color:#000;font-size:6.7px;">-50</div><div class="t" style="left:36.48px;width:40px;text-align:center;top:600.4px;color:#000;font-size:6.7px;">-40</div><div class="t" style="left:65.01px;width:40px;text-align:center;top:600.4px;color:#000;font-size:6.7px;">-30</div><div class="t" style="left:93.54px;width:40px;text-align:center;top:600.4px;color:#000;font-size:6.7px;">-20</div><div class="t" style="left:122.07px;width:40px;text-align:center;top:600.4px;color:#000;font-size:6.7px;">-10</div><div class="t" style="left:151.8px;width:40px;text-align:center;top:600.4px;color:#000;font-size:6.7px;">0</div><div class="t" style="left:180.33px;width:40px;text-align:center;top:600.4px;color:#000;font-size:6.7px;">10</div><div class="t" style="left:208.86px;width:40px;text-align:center;top:600.4px;color:#000;font-size:6.7px;">20</div><div class="t" style="left:237.39px;width:40px;text-align:center;top:600.4px;color:#000;font-size:6.7px;">30</div><div class="t" style="left:265.92px;width:40px;text-align:center;top:600.4px;color:#000;font-size:6.7px;">40</div><div class="t" style="left:294.45px;width:40px;text-align:center;top:600.4px;color:#000;font-size:6.7px;">50</div><div class="t" style="left:322.98px;width:40px;text-align:center;top:600.4px;color:#000;font-size:6.7px;">60</div><div class="t" style="left:351.51px;width:40px;text-align:center;top:600.4px;color:#000;font-size:6.7px;">70</div><div class="t" style="left:380.04px;width:40px;text-align:center;top:600.4px;color:#000;font-size:6.7px;">80</div><div class="t" style="left:408.57px;width:40px;text-align:center;top:600.4px;color:#000;font-size:6.7px;">90</div><div class="t" style="left:437.1px;width:40px;text-align:center;top:600.4px;color:#000;font-size:6.7px;">100</div><div class="t" style="left:465.63px;width:40px;text-align:center;top:600.4px;color:#000;font-size:6.7px;">110</div><div class="t" style="left:494.16px;width:40px;text-align:center;top:600.4px;color:#000;font-size:6.7px;">120</div><div class="t" style="left:522.69px;width:40px;text-align:center;top:600.4px;color:#000;font-size:6.7px;">130</div><div class="t" style="left:551.22px;width:40px;text-align:center;top:600.4px;color:#000;font-size:6.7px;">140</div><div class="t" style="left:579.75px;width:40px;text-align:center;top:600.4px;color:#000;font-size:6.7px;">150</div><div class="t" style="left:608.28px;width:40px;text-align:center;top:600.4px;color:#000;font-size:6.7px;">160</div><div class="t" style="left:636.81px;width:40px;text-align:center;top:600.4px;color:#000;font-size:6.7px;">170</div><div class="t" style="left:665.34px;width:40px;text-align:center;top:600.4px;color:#000;font-size:6.7px;">180</div><div class="t" style="left:693.87px;width:40px;text-align:center;top:600.4px;color:#000;font-size:6.7px;">190</div><div class="t" style="left:722.4px;width:40px;text-align:center;top:600.4px;color:#000;font-size:6.7px;">200</div><div class="t" style="left:750.93px;width:40px;text-align:center;top:600.4px;color:#000;font-size:6.7px;">210</div><div class="t" style="left:779.46px;width:40px;text-align:center;top:600.4px;color:#000;font-size:6.7px;">220</div><div class="t" style="left:807.99px;width:40px;text-align:center;top:600.4px;color:#000;font-size:6.7px;">230</div><div class="t" style="left:836.52px;width:40px;text-align:center;top:600.4px;color:#000;font-size:6.7px;">240</div><div class="t" style="left:865.05px;width:40px;text-align:center;top:600.4px;color:#000;font-size:6.7px;">250</div><div class="t" style="left:893.58px;width:40px;text-align:center;top:600.4px;color:#000;font-size:6.7px;">260</div><div class="t" style="left:922.11px;width:40px;text-align:center;top:600.4px;color:#000;font-size:6.7px;">270</div><div class="t" style="left:950.64px;width:40px;text-align:center;top:600.4px;color:#000;font-size:6.7px;">280</div>
<svg style="left:976px;top:570.4px" width="8" height="8" viewBox="0 0 8 8"><path d="M0.5 0 L8 7.5 M3.2 0 L8 4.8 M5.8 0 L8 2.2" stroke="#262626" stroke-width="0.9" fill="none"/><path d="M0.5 0 L8 7.5 M3.2 0 L8 4.8 M5.8 0 L8 2.2" stroke="#a0a0a0" stroke-width="0.5" fill="none" transform="translate(0.7,-0.3)"/></svg>
<!-- timeline header -->
<div class="mn" style="left:10px;top:612.4px;width:18.8px;height:11.8px;border-radius:2.8px;background:linear-gradient(#5a5a5a,#3c3c3c);"></div>
<svg style="left:12.6px;top:614.6px" width="8" height="8" viewBox="0 0 8 8"><circle cx="4" cy="4" r="3.6" fill="#f2f2f2" stroke="#333" stroke-width="0.5"/><path d="M4 4 L4 1.4 M4 4 L5.6 5.4" stroke="#c02020" stroke-width="0.8"/></svg>
<svg style="left:23px;top:615.1px" width="3.2" height="6.4" viewBox="0 0 3.2 6.4"><path d="M0 2.6 L1.6 0.3 L3.2 2.6 Z M0 3.8 L1.6 6.1 L3.2 3.8 Z" fill="#ccc"/></svg>
<svg style="left:5px;top:618.4px" width="8" height="8" viewBox="0 0 8 8"><path d="M0 0.5 L7.5 8 M0 3.2 L4.8 8 M0 5.8 L2.2 8" stroke="#262626" stroke-width="0.9" fill="none"/><path d="M0 0.5 L7.5 8 M0 3.2 L4.8 8 M0 5.8 L2.2 8" stroke="#a0a0a0" stroke-width="0.5" fill="none" transform="translate(0.7,-0.3)"/></svg>
<div class="t" style="left:36.8px;top:615.2px;">View</div>
<div class="t" style="left:63.4px;top:615.2px;">Marker</div>
<div class="t" style="left:96.8px;top:615.2px;">Frame</div>
<div class="t" style="left:128.6px;top:615.2px;">Playback</div>
<div class="tb" style="left:164.8px;top:612.8px;width:11.6px;height:11.2px;border-radius:2.5px 0 0 2.5px;"></div>
<svg style="left:166.6px;top:614.6px" width="8" height="8" viewBox="0 0 8 8"><circle cx="4" cy="4" r="3.6" fill="#f4e8d8" stroke="#444" stroke-width="0.5"/><path d="M4 4 L4 0.4 A3.6 3.6 0 0 1 7.2 5.6 Z" fill="#e89030"/></svg>
<div class="tb" style="left:176px;top:612.8px;width:11.6px;height:11.2px;border-radius:0 2.5px 2.5px 0;"></div>
<svg style="left:178px;top:614.5px" width="8" height="8" viewBox="0 0 8 8"><path d="M2 3.6 V2.2 Q2 0.6 4 0.6 Q6 0.6 6 2.2 V3.6" stroke="#ddd" stroke-width="0.9" fill="none"/><rect x="1.2" y="3.6" width="5.6" height="3.8" fill="#ddd" stroke="#444" stroke-width="0.4"/></svg>
<div class="nf" style="left:191.6px;top:612.8px;width:71.6px;height:11.2px;border-radius:5.5px 0 0 5.5px;"></div>
<svg style="left:194.8px;top:616.8px" width="2.2" height="3.2" viewBox="0 0 2.2 3.2"><path d="M2.2 0 L0 1.6 L2.2 3.2 Z" fill="#6b6b6b"/></svg><svg style="left:257.6px;top:616.8px" width="2.2" height="3.2" viewBox="0 0 2.2 3.2"><path d="M0 0 L2.2 1.6 L0 3.2 Z" fill="#6b6b6b"/></svg>
<div class="t" style="left:201px;top:615.2px;">Start:</div>
<div class="t" style="right:917.4px;top:615.2px;">1</div>
<div class="nf" style="left:262.6px;top:612.8px;width:68.2px;height:11.2px;border-radius:0 5.5px 5.5px 0;"></div>
<svg style="left:265.8px;top:616.8px" width="2.2" height="3.2" viewBox="0 0 2.2 3.2"><path d="M2.2 0 L0 1.6 L2.2 3.2 Z" fill="#6b6b6b"/></svg><svg style="left:325.2px;top:616.8px" width="2.2" height="3.2" viewBox="0 0 2.2 3.2"><path d="M0 0 L2.2 1.6 L0 3.2 Z" fill="#6b6b6b"/></svg>
<div class="t" style="left:272px;top:615.2px;">End:</div>
<div class="t" style="right:849.8px;top:615.2px;">250</div>
<div class="nf" style="left:333.8px;top:612.8px;width:55px;height:11.2px;border-radius:5.5px;"></div>
<svg style="left:337px;top:616.8px" width="2.2" height="3.2" viewBox="0 0 2.2 3.2"><path d="M2.2 0 L0 1.6 L2.2 3.2 Z" fill="#6b6b6b"/></svg><svg style="left:383.2px;top:616.8px" width="2.2" height="3.2" viewBox="0 0 2.2 3.2"><path d="M0 0 L2.2 1.6 L0 3.2 Z" fill="#6b6b6b"/></svg>
<div class="t" style="right:791.8px;top:615.2px;">1</div>
<div class="tb" style="left:398.4px;top:612.8px;width:12.6px;height:11.2px;border-radius:2.5px 0 0 2.5px;"></div>
<svg style="left:400.4px;top:614.6px" width="9" height="8" viewBox="0 0 9 8"><path d="M1 1 V7 M2 4 L5 1 V7 Z M5 4 L8 1 V7 Z" fill="#eee" stroke="#222" stroke-width="0.5"/></svg>
<div class="tb" style="left:410.47px;top:612.8px;width:12.6px;height:11.2px;border-radius:0;"></div>
<svg style="left:412.47px;top:614.6px" width="9" height="8" viewBox="0 0 9 8"><path d="M0.6 4 L4 1 V7 Z M4.4 4 L7.8 1 V7 Z" fill="#eee" stroke="#222" stroke-width="0.5"/></svg>
<div class="tb" style="left:422.54px;top:612.8px;width:12.6px;height:11.2px;border-radius:0;"></div>
<svg style="left:424.54px;top:614.6px" width="9" height="8" viewBox="0 0 9 8"><path d="M1 4 L7 0.6 V7.4 Z" fill="#eee" stroke="#222" stroke-width="0.6"/></svg>
<div class="tb" style="left:434.61px;top:612.8px;width:12.6px;height:11.2px;border-radius:0;"></div>
<svg style="left:436.61px;top:614.6px" width="9" height="8" viewBox="0 0 9 8"><path d="M8 4 L2 0.6 V7.4 Z" fill="#eee" stroke="#222" stroke-width="0.6"/></svg>
<div class="tb" style="left:446.68px;top:612.8px;width:12.6px;height:11.2px;border-radius:0;"></div>
<svg style="left:448.68px;top:614.6px" width="9" height="8" viewBox="0 0 9 8"><path d="M8.4 4 L5 1 V7 Z M4.6 4 L1.2 1 V7 Z" fill="#eee" stroke="#222" stroke-width="0.5"/></svg>
<div class="tb" style="left:458.75px;top:612.8px;width:12.6px;height:11.2px;border-radius:0 2.5px 2.5px 0;"></div>
<svg style="left:460.75px;top:614.6px" width="9" height="8" viewBox="0 0 9 8"><path d="M8 1 V7 M7 4 L4 1 V7 Z M4 4 L1 1 V7 Z" fill="#eee" stroke="#222" stroke-width="0.5"/></svg>
<div class="mn" style="left:474.4px;top:612.8px;width:70.4px;height:11.2px;"></div>
<div class="t w" style="left:479.6px;top:615.2px;">No Sync</div>
<svg style="left:539.4px;top:615.3px" width="3.2" height="6.4" viewBox="0 0 3.2 6.4"><path d="M0 2.6 L1.6 0.3 L3.2 2.6 Z M0 3.8 L1.6 6.1 L3.2 3.8 Z" fill="#ddd"/></svg>
<div class="tb" style="left:554.4px;top:612.8px;width:12px;height:11.2px;"></div>
<svg style="left:556.6px;top:614.8px" width="7.6" height="7.6" viewBox="0 0 8 8"><circle cx="4" cy="4" r="3.2" fill="#e83a1a" stroke="#f8c8b8" stroke-width="0.7"/></svg>
<div class="tf" style="left:569.8px;top:612.8px;width:80px;height:11.2px;border-radius:2.5px 0 0 2.5px;background:linear-gradient(#8e8e8e,#a2a2a2);"></div>
<svg style="left:572px;top:614.3px" width="8" height="9" viewBox="0 0 8 9"><circle cx="2.6" cy="2.2" r="1.6" fill="none" stroke="#e8c860" stroke-width="1"/><path d="M2.8 3.8 V8.2 M2.8 6 H5.4 M2.8 7.6 H6.2" stroke="#e8c860" stroke-width="1"/><circle cx="2.6" cy="2.2" r="2.2" fill="none" stroke="#3a3010" stroke-width="0.3"/></svg>
<div class="tb" style="left:649.4px;top:612.8px;width:12.4px;height:11.2px;border-radius:0;"></div>
<svg style="left:651.4px;top:614.5px" width="8" height="8" viewBox="0 0 8 8"><path d="M1 7.4 L5.4 3" stroke="#d8d8d8" stroke-width="1.3"/><circle cx="6" cy="2.2" r="1.5" fill="none" stroke="#d8d8d8" stroke-width="0.9"/></svg>
<div class="tb" style="left:661.4px;top:612.8px;width:12.2px;height:11.2px;border-radius:0 2.5px 2.5px 0;"></div>
<svg style="left:663.4px;top:614.5px" width="8" height="8" viewBox="0 0 8 8"><path d="M1 7.4 L5.4 3" stroke="#d8d8d8" stroke-width="1.2"/><circle cx="6" cy="2.2" r="1.4" fill="none" stroke="#d8d8d8" stroke-width="0.8"/><path d="M1 1 L7 7 M7 1 L1 7" stroke="#d82020" stroke-width="1"/></svg>
<!-- outliner -->
<div class="mn" style="left:989px;top:35.6px;width:19.4px;height:12.2px;border-radius:2.8px;background:linear-gradient(#5a5a5a,#3c3c3c);"></div>
<svg style="left:991.4px;top:37.8px" width="9" height="8.4" viewBox="0 0 9 8.4"><rect x="0.4" y="0.6" width="4" height="1.5" fill="#f0a030"/><rect x="2.4" y="3.4" width="5.8" height="1.5" fill="#e8e8e8"/><rect x="2.4" y="6.2" width="5.8" height="1.5" fill="#e8e8e8"/><path d="M1.2 2 V7 H2.4 M1.2 4.2 H2.4" stroke="#bbb" stroke-width="0.6" fill="none"/></svg>
<svg style="left:1002.6px;top:38.5px" width="3.2" height="6.4" viewBox="0 0 3.2 6.4"><path d="M0 2.6 L1.6 0.3 L3.2 2.6 Z M0 3.8 L1.6 6.1 L3.2 3.8 Z" fill="#ccc"/></svg>
<div class="t" style="left:1015.4px;top:38.7px;">View</div>
<div class="t" style="left:1042px;top:38.7px;">Search</div>
<div class="mn" style="left:1071px;top:36px;width:72.4px;height:11.6px;"></div>
<div class="t w" style="left:1075.6px;top:38.7px;">All Scenes</div>
<svg style="left:1138px;top:38.8px" width="3.2" height="6.4" viewBox="0 0 3.2 6.4"><path d="M0 2.6 L1.6 0.3 L3.2 2.6 Z M0 3.8 L1.6 6.1 L3.2 3.8 Z" fill="#ddd"/></svg>
<div class="tb" style="left:1146.6px;top:36px;width:21px;height:11.6px;border-radius:2.5px 0 0 2.5px;background:linear-gradient(#cacaca,#adadad);"></div>
<svg style="left:1149.6px;top:37.6px" width="10" height="9.4" viewBox="0 0 10 9.4"><path d="M1 8.6 L4.6 5" stroke="#c87838" stroke-width="1.5"/><circle cx="6.4" cy="3.4" r="2.6" fill="#e4dede" stroke="#444" stroke-width="0.6"/></svg>
<svg style="left:1158.8px;top:34.4px" width="8" height="8" viewBox="0 0 8 8"><path d="M0.5 0 L8 7.5 M3.2 0 L8 4.8 M5.8 0 L8 2.2" stroke="#262626" stroke-width="0.9" fill="none"/><path d="M0.5 0 L8 7.5 M3.2 0 L8 4.8 M5.8 0 L8 2.2" stroke="#a0a0a0" stroke-width="0.5" fill="none" transform="translate(0.7,-0.3)"/></svg>
<div style="left:984px;top:51px;width:183px;height:12px;background:rgba(0,0,0,0.035);"></div>
<div style="left:984px;top:63px;width:183px;height:12px;background:rgba(255,255,255,0.03);"></div>
<div style="left:984px;top:75px;width:183px;height:12px;background:rgba(0,0,0,0.035);"></div>
<div style="left:984px;top:87px;width:183px;height:12px;background:rgba(255,255,255,0.03);"></div>
<div style="left:984px;top:99px;width:183px;height:12px;background:rgba(0,0,0,0.035);"></div>
<div style="left:984px;top:111px;width:183px;height:12px;background:rgba(255,255,255,0.03);"></div>
<div style="left:984px;top:123px;width:183px;height:12px;background:rgba(0,0,0,0.035);"></div>
<div style="left:984px;top:135px;width:183px;height:12px;background:rgba(255,255,255,0.03);"></div>
<div style="left:984px;top:147px;width:183px;height:12px;background:rgba(0,0,0,0.035);"></div>
<div style="left:984px;top:159px;width:183px;height:12px;background:rgba(255,255,255,0.03);"></div>
<div style="left:1129px;top:50px;width:0.7px;height:118px;background:rgba(0,0,0,0.12);"></div>
<div style="left:1141.8px;top:50px;width:0.7px;height:118px;background:rgba(0,0,0,0.12);"></div>
<div style="left:1154px;top:50px;width:0.7px;height:118px;background:rgba(0,0,0,0.12);"></div>
<svg style="left:985px;top:50px" width="182" height="128" viewBox="985 50 182 128"><path d="M991.6 56.8 H997 M1002 61 V93 M1002 69 H1008 M1002 81 H1008 M1002 93 H1008 M1013.7 98 V117 H1021 M1013.7 105 H1021" stroke="#3c3c3c" stroke-width="0.5" fill="none"/></svg>
<svg style="left:986.8px;top:54.2px" width="5.2" height="5.2" viewBox="0 0 5.2 5.2"><circle cx="2.6" cy="2.6" r="2.2" fill="#d0d0d0" stroke="#222" stroke-width="0.5"/><path d="M1.4 2.6 H3.8" stroke="#111" stroke-width="0.6"/></svg>
<svg style="left:1001.8px;top:66.4px" width="5.2" height="5.2" viewBox="0 0 5.2 5.2"><circle cx="2.6" cy="2.6" r="2.2" fill="#d0d0d0" stroke="#222" stroke-width="0.5"/><path d="M1.4 2.6 H3.8 M2.6 1.4 V3.8" stroke="#111" stroke-width="0.6"/></svg>
<svg style="left:998.4px;top:90.4px" width="5.2" height="5.2" viewBox="0 0 5.2 5.2"><circle cx="2.6" cy="2.6" r="2.2" fill="#d0d0d0" stroke="#222" stroke-width="0.5"/><path d="M1.4 2.6 H3.8" stroke="#111" stroke-width="0.6"/></svg>
<svg style="left:1013.8px;top:102.4px" width="5.2" height="5.2" viewBox="0 0 5.2 5.2"><circle cx="2.6" cy="2.6" r="2.2" fill="#d0d0d0" stroke="#222" stroke-width="0.5"/><path d="M1.4 2.6 H3.8 M2.6 1.4 V3.8" stroke="#111" stroke-width="0.6"/></svg>
<svg style="left:997.4px;top:52.2px" width="9.2" height="9.2" viewBox="0 0 10 10"><circle cx="5.4" cy="5" r="4.6" fill="#8a8a6a" opacity=".55"/><rect x="1" y="5" width="3.6" height="3.6" fill="#f4f4f4" stroke="#445" stroke-width="0.5"/><circle cx="6" cy="4" r="2.6" fill="#6aa0e0" stroke="#234" stroke-width="0.5"/><path d="M6 6.4 L8.6 9 L9 6 Z" fill="#3a6ac0"/><circle cx="2.6" cy="2" r="1.3" fill="#ffe060"/></svg>
<div class="t" style="left:1008.8px;top:53.7px;">Scene</div>
<svg style="left:1009.1px;top:64.4px" width="9.2" height="9.2" viewBox="0 0 10 10"><rect x="1" y="1" width="6.4" height="6.8" fill="#dfe8f4" stroke="#334" stroke-width="0.6"/><rect x="2.6" y="2.4" width="6.4" height="6.8" fill="#f4f4f4" stroke="#334" stroke-width="0.6"/><path d="M4 4 H7.6 M4 5.6 H7.6 M4 7.2 H7.6" stroke="#5a7ac0" stroke-width="0.7"/></svg>
<div class="t" style="left:1021px;top:65.9px;">RenderLayers</div>
<div style="left:1068.8px;top:65.4px;width:0.7px;height:7.2px;background:#222;"></div>
<svg style="left:1075px;top:64.4px" width="9.2" height="9.2" viewBox="0 0 10 10"><circle cx="5" cy="5" r="4.9" fill="#cfcfcf" opacity=".8"/><rect x="1.6" y="1.4" width="5.6" height="6" fill="#dfe8f4" stroke="#334" stroke-width="0.6"/><rect x="3" y="2.6" width="5.6" height="6" fill="#f4f4f4" stroke="#334" stroke-width="0.6"/><path d="M4.2 4.2 H7.4 M4.2 5.6 H7.4 M4.2 7 H7.4" stroke="#5a7ac0" stroke-width="0.7"/></svg>
<svg style="left:1009.1px;top:76.4px" width="9.2" height="9.2" viewBox="0 0 10 10"><circle cx="5" cy="5" r="4.2" fill="#4a78c8" stroke="#dfe8f8" stroke-width="0.7"/><path d="M2.4 3.4 Q4 2 5 3.6 Q6 5 4.4 6.4 Q3 7 2.4 5.4 Z M6.4 5.6 Q8 5 7.6 7 Q6.6 8 6.4 5.6 Z" fill="#58b058"/></svg>
<div class="t" style="left:1021px;top:77.9px;">World</div>
<svg style="left:1009.1px;top:88.4px" width="9.2" height="9.2" viewBox="0 0 10 10"><circle cx="5" cy="5" r="4.8" fill="#e8923a" opacity=".85"/><path d="M1.4 2 H8.6 L5 9 Z" fill="none" stroke="#fff" stroke-width="0.9"/><path d="M3 2 L5 6 L7 2" fill="none" stroke="#fff" stroke-width="0.6"/></svg>
<div class="t w" style="left:1021px;top:89.9px;">Satellite</div>
<svg style="left:1021.8px;top:100.4px" width="9.2" height="9.2" viewBox="0 0 10 10"><path d="M1.6 1.8 L5 8.4 L8.4 1.8" fill="none" stroke="#222" stroke-width="0.6" stroke-dasharray="0.8 0.6"/><circle cx="1.6" cy="1.8" r="1.1" fill="#eee" stroke="#222" stroke-width="0.4"/><circle cx="8.4" cy="1.8" r="1.1" fill="#eee" stroke="#222" stroke-width="0.4"/><circle cx="5" cy="8.4" r="1.1" fill="#eee" stroke="#222" stroke-width="0.4"/></svg>
<div class="t" style="left:1033.8px;top:101.9px;">Satellite</div>
<div style="left:1064.6px;top:101.4px;width:0.7px;height:7.2px;background:#222;"></div>
<svg style="left:1070.6px;top:100.4px" width="9.2" height="9.2" viewBox="0 0 10 10"><circle cx="5" cy="5" r="4.9" fill="#cfcfcf" opacity=".8"/><circle cx="5" cy="5" r="3.8" fill="#908484" stroke="#4a4a4a" stroke-width="0.5"/><circle cx="3.8" cy="3.8" r="1.8" fill="#c8b8b8" opacity=".8"/><path d="M5 5 L8.8 5 A3.8 3.8 0 0 1 5 8.8 Z" fill="#9a6a5e" opacity=".55"/></svg>
<svg style="left:1083.2px;top:100.4px" width="9.2" height="9.2" viewBox="0 0 10 10"><circle cx="5" cy="5" r="3.8" fill="#908484" stroke="#4a4a4a" stroke-width="0.5"/><circle cx="3.8" cy="3.8" r="1.8" fill="#c8b8b8" opacity=".8"/><path d="M5 5 L8.8 5 A3.8 3.8 0 0 1 5 8.8 Z" fill="#9a6a5e" opacity=".55"/></svg>
<svg style="left:1095.3px;top:100.4px" width="9.2" height="9.2" viewBox="0 0 10 10"><circle cx="5" cy="5" r="3.8" fill="#908484" stroke="#4a4a4a" stroke-width="0.5"/><circle cx="3.8" cy="3.8" r="1.8" fill="#c8b8b8" opacity=".8"/><path d="M5 5 L8.8 5 A3.8 3.8 0 0 1 5 8.8 Z" fill="#9a6a5e" opacity=".55"/></svg>
<svg style="left:1107.6px;top:100.4px" width="9.2" height="9.2" viewBox="0 0 10 10"><circle cx="5" cy="5" r="3.8" fill="#908484" stroke="#4a4a4a" stroke-width="0.5"/><circle cx="3.8" cy="3.8" r="1.8" fill="#c8b8b8" opacity=".8"/><path d="M5 5 L8.8 5 A3.8 3.8 0 0 1 5 8.8 Z" fill="#9a6a5e" opacity=".55"/></svg>
<svg style="left:1119.3px;top:100.4px" width="9.2" height="9.2" viewBox="0 0 10 10"><circle cx="5" cy="5" r="3.8" fill="#908484" stroke="#4a4a4a" stroke-width="0.5"/><circle cx="3.8" cy="3.8" r="1.8" fill="#c8b8b8" opacity=".8"/><path d="M5 5 L8.8 5 A3.8 3.8 0 0 1 5 8.8 Z" fill="#9a6a5e" opacity=".55"/></svg>
<svg style="left:1021.8px;top:112.4px" width="9.2" height="9.2" viewBox="0 0 10 10"><circle cx="5" cy="5" r="4.8" fill="#e8923a" opacity=".85"/><path d="M5 5 V1 M5 5 L1.6 8 M5 5 L8.4 8" stroke="#fff" stroke-width="1"/></svg>
<div class="t" style="left:1033.8px;top:113.9px;">Solar_Panels</div>
<svg style="left:1131.4px;top:88.4px" width="9.2" height="9.2" viewBox="0 0 10 10"><path d="M0.4 5 Q5 0.8 9.6 5 Q5 8.6 0.4 5 Z" fill="#f4f4f4" stroke="#333" stroke-width="0.5"/><circle cx="5" cy="4.8" r="1.1" fill="#333"/></svg>
<svg style="left:1143.7px;top:88.4px" width="9.2" height="9.2" viewBox="0 0 10 10"><path d="M2.6 0.8 L2.6 8.2 L4.4 6.6 L5.6 9.4 L6.8 8.8 L5.6 6.2 L8 6 Z" fill="#f4f4f4" stroke="#222" stroke-width="0.6"/></svg>
<svg style="left:1155.4px;top:88.4px" width="9.2" height="9.2" viewBox="0 0 10 10"><rect x="0.8" y="2.4" width="8.4" height="6.2" rx="0.8" fill="#5a5a5a" stroke="#222" stroke-width="0.5"/><rect x="1.6" y="3.2" width="6.8" height="4.6" fill="#c8c8c8"/><circle cx="5" cy="5.6" r="1.7" fill="#eee" stroke="#a03030" stroke-width="0.6"/><rect x="2" y="1.2" width="3" height="1.4" fill="#5a5a5a"/></svg>
<svg style="left:1131.4px;top:112.4px" width="9.2" height="9.2" viewBox="0 0 10 10"><path d="M0.4 5 Q5 0.8 9.6 5 Q5 8.6 0.4 5 Z" fill="#f4f4f4" stroke="#333" stroke-width="0.5"/><circle cx="5" cy="4.8" r="1.1" fill="#333"/></svg>
<svg style="left:1143.7px;top:112.4px" width="9.2" height="9.2" viewBox="0 0 10 10"><path d="M2.6 0.8 L2.6 8.2 L4.4 6.6 L5.6 9.4 L6.8 8.8 L5.6 6.2 L8 6 Z" fill="#f4f4f4" stroke="#222" stroke-width="0.6"/></svg>
<svg style="left:1155.4px;top:112.4px" width="9.2" height="9.2" viewBox="0 0 10 10"><rect x="0.8" y="2.4" width="8.4" height="6.2" rx="0.8" fill="#5a5a5a" stroke="#222" stroke-width="0.5"/><rect x="1.6" y="3.2" width="6.8" height="4.6" fill="#c8c8c8"/><circle cx="5" cy="5.6" r="1.7" fill="#eee" stroke="#a03030" stroke-width="0.6"/><rect x="2" y="1.2" width="3" height="1.4" fill="#5a5a5a"/></svg>
<div style="left:986.6px;top:168.2px;width:176.4px;height:7.2px;border-radius:3.6px;background:linear-gradient(#555,#626262);border:0.5px solid #444;"></div>
<div style="left:986.6px;top:168.2px;width:163.6px;height:7.2px;border-radius:3.6px;background:linear-gradient(#8e8e8e,#7c7c7c);border:0.6px solid #444;"></div>
<svg style="left:985px;top:170.4px" width="8" height="8" viewBox="0 0 8 8"><path d="M0 0.5 L7.5 8 M0 3.2 L4.8 8 M0 5.8 L2.2 8" stroke="#262626" stroke-width="0.9" fill="none"/><path d="M0 0.5 L7.5 8 M0 3.2 L4.8 8 M0 5.8 L2.2 8" stroke="#a0a0a0" stroke-width="0.5" fill="none" transform="translate(0.7,-0.3)"/></svg>
<!-- properties editor -->
<div class="mn" style="left:989.2px;top:180.6px;width:18.6px;height:12px;border-radius:2.8px;background:linear-gradient(#5a5a5a,#3c3c3c);"></div>
<svg style="left:991.6px;top:182.9px" width="8.6" height="8" viewBox="0 0 8.6 8"><rect x="1.6" y="0.8" width="6.4" height="2.4" rx="1.2" fill="none" stroke="#e8e8e8" stroke-width="0.7"/><rect x="0.6" y="4.6" width="6.4" height="2.4" rx="1.2" fill="#e8e8e8"/></svg>
<svg style="left:1002px;top:183.4px" width="3.2" height="6.4" viewBox="0 0 3.2 6.4"><path d="M0 2.6 L1.6 0.3 L3.2 2.6 Z M0 3.8 L1.6 6.1 L3.2 3.8 Z" fill="#ccc"/></svg>
<svg style="left:1158.8px;top:179.4px" width="8" height="8" viewBox="0 0 8 8"><path d="M0.5 0 L8 7.5 M3.2 0 L8 4.8 M5.8 0 L8 2.2" stroke="#262626" stroke-width="0.9" fill="none"/><path d="M0.5 0 L8 7.5 M3.2 0 L8 4.8 M5.8 0 L8 2.2" stroke="#a0a0a0" stroke-width="0.5" fill="none" transform="translate(0.7,-0.3)"/></svg>
<div class="mn" style="left:1012.3px;top:181px;width:12.7px;height:11.4px;border-radius:2.5px 0 0 2.5px;"></div>
<svg style="left:1014.2px;top:182.4px;opacity:.85" width="9" height="9" viewBox="0 0 10 10"><rect x="0.8" y="3" width="8.4" height="5.6" rx="0.8" fill="#b8b8b8" stroke="#222" stroke-width="0.5"/><circle cx="5.4" cy="5.8" r="2" fill="#444" stroke="#ddd" stroke-width="0.5"/><rect x="1.6" y="1.6" width="3.4" height="1.6" fill="#999" stroke="#222" stroke-width="0.4"/><circle cx="8" cy="2.2" r="0.8" fill="#c03030"/></svg>
<div class="mn" style="left:1024.46px;top:181px;width:12.7px;height:11.4px;border-radius:0;"></div>
<svg style="left:1026.36px;top:182.4px;opacity:.85" width="9" height="9" viewBox="0 0 10 10"><rect x="1" y="1" width="6.4" height="6.8" fill="#dfe8f4" stroke="#334" stroke-width="0.6"/><rect x="2.6" y="2.4" width="6.4" height="6.8" fill="#f4f4f4" stroke="#334" stroke-width="0.6"/><path d="M4 4 H7.6 M4 5.6 H7.6" stroke="#5a7ac0" stroke-width="0.7"/></svg>
<div class="mn" style="left:1036.62px;top:181px;width:12.7px;height:11.4px;border-radius:0;"></div>
<svg style="left:1038.52px;top:182.4px;opacity:.85" width="9" height="9" viewBox="0 0 10 10"><rect x="1" y="5" width="3.6" height="3.6" fill="#f4f4f4" stroke="#445" stroke-width="0.5"/><circle cx="6" cy="4" r="2.6" fill="#6aa0e0" stroke="#234" stroke-width="0.5"/><circle cx="2.6" cy="2" r="1.3" fill="#ffe060"/></svg>
<div class="mn" style="left:1048.78px;top:181px;width:12.7px;height:11.4px;border-radius:0;"></div>
<svg style="left:1050.68px;top:182.4px;opacity:.85" width="9" height="9" viewBox="0 0 10 10"><circle cx="5" cy="5" r="4" fill="#4a78c8" stroke="#dfe8f8" stroke-width="0.6"/><path d="M2.4 3.4 Q4 2 5 3.6 Q6 5 4.4 6.4 Q3 7 2.4 5.4 Z M6.4 5.6 Q8 5 7.6 7 Q6.6 8 6.4 5.6 Z" fill="#58b058"/></svg>
<div class="mn" style="left:1060.94px;top:181px;width:12.7px;height:11.4px;border-radius:0;"></div>
<svg style="left:1062.84px;top:182.4px;opacity:.85" width="9" height="9" viewBox="0 0 10 10"><path d="M5 0.8 L9 2.4 L9 7.4 L5 9.2 L1 7.4 L1 2.4 Z" fill="#dc9448" stroke="#7a4a10" stroke-width="0.5"/><path d="M1 2.4 L5 4 L9 2.4 L5 0.8 Z" fill="#f4d0a0"/><path d="M5 4 L9 2.4 L9 7.4 L5 9.2 Z" fill="#b87a38"/><path d="M5 4 V9.2" stroke="#a05a18" stroke-width="0.5"/></svg>
<div class="mn" style="left:1073.1px;top:181px;width:12.7px;height:11.4px;border-radius:0;"></div>
<svg style="left:1075px;top:182.4px;opacity:.85" width="9" height="9" viewBox="0 0 10 10"><rect x="0.8" y="4.4" width="5" height="3" rx="1.5" fill="none" stroke="#ddd" stroke-width="1" transform="rotate(-35 3.3 5.9)"/><rect x="4" y="2.4" width="5" height="3" rx="1.5" fill="none" stroke="#ddd" stroke-width="1" transform="rotate(-35 6.5 3.9)"/></svg>
<div class="sel" style="left:1085.26px;top:181px;width:12.7px;height:11.4px;border-radius:0;"></div>
<svg style="left:1087.16px;top:182.4px;opacity:.85" width="9" height="9" viewBox="0 0 10 10"><path d="M1.4 8.6 L5.6 4.4" stroke="#e8f0ff" stroke-width="1.7"/><path d="M5 2.4 Q5.4 0.6 7.6 1 L6.4 2.4 L7.6 3.6 L9 2.4 Q9.4 4.6 7.6 5 Q6 5.2 5.2 4.6 Z" fill="#e8f0ff"/></svg>
<div class="mn" style="left:1097.42px;top:181px;width:12.7px;height:11.4px;border-radius:0;"></div>
<svg style="left:1099.32px;top:182.4px;opacity:.85" width="9" height="9" viewBox="0 0 10 10"><path d="M1.6 1.8 L5 8.4 L8.4 1.8 Z" fill="none" stroke="#ddd" stroke-width="0.7"/><circle cx="1.6" cy="1.8" r="0.9" fill="#eee"/><circle cx="8.4" cy="1.8" r="0.9" fill="#eee"/><circle cx="5" cy="8.4" r="0.9" fill="#eee"/></svg>
<div class="mn" style="left:1109.58px;top:181px;width:12.7px;height:11.4px;border-radius:0;"></div>
<svg style="left:1111.48px;top:182.4px;opacity:.85" width="9" height="9" viewBox="0 0 10 10"><circle cx="5" cy="5" r="3.9" fill="#908484" stroke="#3a3a3a" stroke-width="0.5"/><circle cx="3.8" cy="3.8" r="1.8" fill="#c8b8b8" opacity=".8"/><path d="M5 5 L8.9 5 A3.9 3.9 0 0 1 5 8.9 Z" fill="#9a6a5e" opacity=".55"/></svg>
<div class="mn" style="left:1121.74px;top:181px;width:12.7px;height:11.4px;border-radius:0;"></div>
<svg style="left:1123.64px;top:182.4px;opacity:.85" width="9" height="9" viewBox="0 0 10 10"><rect x="1" y="1" width="8" height="8" fill="#f0f0f0"/><path d="M1 1 h2.67 v2.67 h-2.67 Z M6.33 1 h2.67 v2.67 h-2.67 Z M3.67 3.67 h2.67 v2.67 h-2.67 Z M1 6.33 h2.67 v2.67 h-2.67 Z M6.33 6.33 h2.67 v2.67 h-2.67 Z" fill="#c03030"/></svg>
<div class="mn" style="left:1133.9px;top:181px;width:12.7px;height:11.4px;border-radius:0;"></div>
<svg style="left:1135.8px;top:182.4px;opacity:.85" width="9" height="9" viewBox="0 0 10 10"><path d="M3 0.6 V5.4 M0.6 3 H5.4 M7 4.6 V9.4 M4.6 7 H9.4 M7.6 0.6 V3.4 M6.2 2 H9" stroke="#ffe88a" stroke-width="0.8"/></svg>
<div class="mn" style="left:1146.06px;top:181px;width:12.7px;height:11.4px;border-radius:0 2.5px 2.5px 0;"></div>
<svg style="left:1147.96px;top:182.4px;opacity:.85" width="9" height="9" viewBox="0 0 10 10"><path d="M1 4 L4 8.4 L7.6 2.4" fill="none" stroke="#3a6ac8" stroke-width="1.6"/><circle cx="7.8" cy="2" r="1.5" fill="#d8d8d8" stroke="#444" stroke-width="0.4"/></svg>
<svg style="left:989.8px;top:201.2px" width="10.4" height="10.4" viewBox="0 0 9 9"><path d="M0.8 8.2 L3.8 5.2" stroke="#eee" stroke-width="0.9"/><path d="M2.6 3.6 L5.4 6.4 L6.2 4.8 L8.4 3.4 L5.6 0.6 L4.2 2.8 Z" fill="#ececec" stroke="#333" stroke-width="0.5"/></svg>
<svg style="left:1004px;top:201.8px" width="9" height="8.4" viewBox="0 0 9 8"><rect x="0.5" y="4.2" width="3.6" height="3.4" fill="#f4f4f4" stroke="#445" stroke-width="0.5"/><circle cx="5.6" cy="3" r="2.2" fill="#6aa0e0" stroke="#234" stroke-width="0.5"/><path d="M5.4 5.2 L8 7.6 L8.4 4.6 Z" fill="#3a6ac0"/><circle cx="1.8" cy="1.6" r="1.2" fill="#ffe060"/></svg>
<svg style="left:1016.6px;top:204.7px" width="3" height="3" viewBox="0 0 5 5"><path d="M0.6 0 L0.6 5 L4.8 2.5 Z" fill="#222"/></svg>
<svg style="left:1028.6px;top:201.8px" width="8.6" height="8.6" viewBox="0 0 10 10"><path d="M5 0.8 L9 2.4 L9 7.4 L5 9.2 L1 7.4 L1 2.4 Z" fill="#dc9448" stroke="#7a4a10" stroke-width="0.5"/><path d="M1 2.4 L5 4 L9 2.4 L5 0.8 Z" fill="#f4d0a0"/><path d="M5 4 L9 2.4 L9 7.4 L5 9.2 Z" fill="#b87a38"/><path d="M5 4 V9.2" stroke="#a05a18" stroke-width="0.5"/></svg>
<div class="t" style="left:1039.8px;top:202.9px;">Satellite</div>
<div class="mn" style="left:988.4px;top:221.6px;width:172.8px;height:11.6px;"></div>
<div class="t w" style="left:992.8px;top:224.3px;">Add Modifier</div>
<svg style="left:1155.8px;top:224.2px" width="3.2" height="6.4" viewBox="0 0 3.2 6.4"><path d="M0 2.6 L1.6 0.3 L3.2 2.6 Z M0 3.8 L1.6 6.1 L3.2 3.8 Z" fill="#ddd"/></svg>
<svg style="left:984.4px;top:618.2px" width="8" height="8" viewBox="0 0 8 8"><path d="M0 0.5 L7.5 8 M0 3.2 L4.8 8 M0 5.8 L2.2 8" stroke="#262626" stroke-width="0.9" fill="none"/><path d="M0 0.5 L7.5 8 M0 3.2 L4.8 8 M0 5.8 L2.2 8" stroke="#a0a0a0" stroke-width="0.5" fill="none" transform="translate(0.7,-0.3)"/></svg>

</div>
</body></html>
